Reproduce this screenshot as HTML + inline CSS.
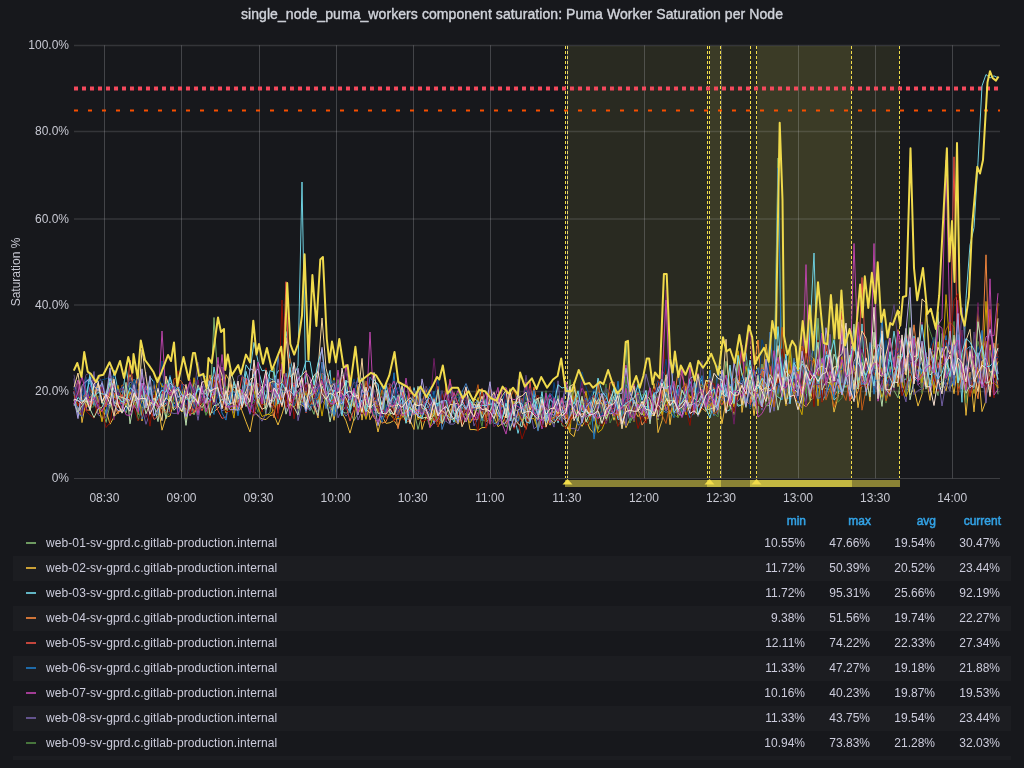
<!DOCTYPE html>
<html><head><meta charset="utf-8">
<style>
html,body{margin:0;padding:0;}
body{width:1024px;height:768px;overflow:hidden;will-change:transform;background:#17181c;font-family:"Liberation Sans",sans-serif;color:#ccccdc;position:relative;}
.title{position:absolute;left:0;top:5px;width:1024px;text-align:center;font-size:14px;line-height:18px;color:#d0d3da;letter-spacing:0.08px;-webkit-text-stroke:0.4px #d0d3da;}
svg{position:absolute;left:0;top:0;}
.grid line.h{stroke:rgba(210,210,215,0.155);stroke-width:1.4;} .grid line.h0{stroke:rgba(210,210,215,0.2);stroke-width:1;} .grid line.v{stroke:rgba(210,210,215,0.24);stroke-width:1;}
.axis text{font-size:12px;fill:#c7c8d2;font-family:"Liberation Sans",sans-serif;}
.row{position:absolute;left:13px;width:998px;height:25px;}
.row.alt{background:#1c1d21;}
.row i{position:absolute;left:13px;top:11px;width:10px;height:2px;opacity:0.85;}
.row .nm{position:absolute;left:33px;top:5px;font-size:12px;line-height:14px;color:#ccccdc;white-space:nowrap;letter-spacing:0.09px;}
.row .v{position:absolute;top:5px;font-size:12px;line-height:14px;color:#ccccdc;text-align:right;width:80px;}
.c1{left:712px} .c2{left:777px} .c3{left:842px} .c4{left:907px}
.hdr{position:absolute;top:514px;font-size:12px;line-height:14px;color:#33a2e5;-webkit-text-stroke:0.5px #33a2e5;text-align:right;width:80px;}
</style></head><body>
<div class="title">single_node_puma_workers component saturation: Puma Worker Saturation per Node</div>
<svg width="1024" height="520" viewBox="0 0 1024 520">
<g><rect x="568" y="46" width="153" height="432" fill="#E8EE5A" fill-opacity="0.09"/><rect x="710" y="46" width="142" height="432" fill="#E8EE5A" fill-opacity="0.09"/><rect x="757" y="46" width="143" height="432" fill="#E8EE5A" fill-opacity="0.09"/><line x1="565.5" y1="46" x2="565.5" y2="478" stroke="#F2DC4A" stroke-width="1" stroke-dasharray="3,2"/><line x1="567.5" y1="46" x2="567.5" y2="478" stroke="#F2DC4A" stroke-width="1" stroke-dasharray="3,2"/><line x1="707.5" y1="46" x2="707.5" y2="478" stroke="#F2DC4A" stroke-width="1" stroke-dasharray="3,2"/><line x1="709.5" y1="46" x2="709.5" y2="478" stroke="#F2DC4A" stroke-width="1" stroke-dasharray="3,2"/><line x1="720.5" y1="46" x2="720.5" y2="478" stroke="#F2DC4A" stroke-width="1" stroke-dasharray="3,2"/><line x1="750.5" y1="46" x2="750.5" y2="478" stroke="#F2DC4A" stroke-width="1" stroke-dasharray="3,2"/><line x1="756.5" y1="46" x2="756.5" y2="478" stroke="#F2DC4A" stroke-width="1" stroke-dasharray="3,2"/><line x1="851.5" y1="46" x2="851.5" y2="478" stroke="#F2DC4A" stroke-width="1" stroke-dasharray="3,2"/><line x1="899.5" y1="46" x2="899.5" y2="478" stroke="#F2DC4A" stroke-width="1" stroke-dasharray="3,2"/></g>
<g class="grid"><line class="h" x1="74" y1="45.50" x2="1000" y2="45.50"/><line class="h" x1="74" y1="131.50" x2="1000" y2="131.50"/><line class="h" x1="74" y1="219.00" x2="1000" y2="219.00"/><line class="h" x1="74" y1="305.00" x2="1000" y2="305.00"/><line class="h" x1="74" y1="391.50" x2="1000" y2="391.50"/><line class="h0" x1="74" y1="478.5" x2="1000" y2="478.5"/><line class="v" x1="104.5" y1="45.3" x2="104.5" y2="478.3"/><line class="v" x1="181.5" y1="45.3" x2="181.5" y2="478.3"/><line class="v" x1="259.5" y1="45.3" x2="259.5" y2="478.3"/><line class="v" x1="336.5" y1="45.3" x2="336.5" y2="478.3"/><line class="v" x1="413.5" y1="45.3" x2="413.5" y2="478.3"/><line class="v" x1="490.5" y1="45.3" x2="490.5" y2="478.3"/><line class="v" x1="567.5" y1="45.3" x2="567.5" y2="478.3"/><line class="v" x1="644.5" y1="45.3" x2="644.5" y2="478.3"/><line class="v" x1="721.5" y1="45.3" x2="721.5" y2="478.3"/><line class="v" x1="798.5" y1="45.3" x2="798.5" y2="478.3"/><line class="v" x1="875.5" y1="45.3" x2="875.5" y2="478.3"/><line class="v" x1="952.5" y1="45.3" x2="952.5" y2="478.3"/></g>

<line x1="74" y1="88.5" x2="1000" y2="88.5" stroke="#F2495C" stroke-width="4" stroke-dasharray="4,4"/>
<line x1="74" y1="110.5" x2="1000" y2="110.5" stroke="#F74F00" stroke-width="2" stroke-dasharray="4,10"/>

<g><polyline fill="none" stroke="#7EB26D" stroke-width="1" stroke-linejoin="round" points="74.0,400.1 78.0,408.1 82.0,410.5 86.0,396.3 90.0,411.0 94.0,394.6 98.0,406.3 102.0,409.0 106.0,422.5 110.0,405.0 114.0,414.5 118.0,397.9 122.0,402.3 126.0,413.1 130.0,399.1 134.0,397.7 138.0,415.0 142.0,392.3 146.0,407.6 150.0,408.0 154.0,397.7 158.0,410.2 162.0,405.8 166.0,378.7 170.0,412.6 174.0,383.6 178.0,409.1 182.0,389.9 186.0,413.7 190.0,401.4 194.0,414.9 198.0,405.3 202.0,395.8 206.0,414.6 210.0,408.0 214.0,317.5 218.0,383.7 222.0,402.3 226.0,391.0 230.0,406.7 234.0,403.7 238.0,411.5 242.0,406.7 246.0,398.5 250.0,393.1 254.0,382.2 258.0,383.8 262.0,386.9 266.0,415.5 270.0,412.5 274.0,367.4 278.0,408.8 282.0,397.6 286.0,390.2 290.0,395.8 294.0,395.0 298.0,403.9 302.0,399.8 306.0,386.2 310.0,405.1 314.0,414.3 318.0,388.4 322.0,381.8 326.0,377.7 330.0,391.4 334.0,416.9 338.0,379.5 342.0,411.3 346.0,413.2 350.0,411.1 354.0,420.6 358.0,413.5 362.0,406.7 366.0,407.2 370.0,411.6 374.0,408.4 378.0,415.6 382.0,416.2 386.0,417.1 390.0,404.9 394.0,420.5 398.0,413.8 402.0,402.7 406.0,411.3 410.0,409.7 414.0,410.4 418.0,429.4 422.0,414.3 426.0,411.9 430.0,415.3 434.0,413.4 438.0,414.8 442.0,406.0 446.0,414.1 450.0,401.8 454.0,413.4 458.0,413.9 462.0,401.8 466.0,391.3 470.0,400.1 474.0,404.0 478.0,406.0 482.0,419.2 486.0,421.6 490.0,419.0 494.0,423.8 498.0,421.4 502.0,420.5 506.0,427.0 510.0,414.4 514.0,411.6 518.0,409.3 522.0,409.3 526.0,412.4 530.0,420.1 534.0,412.5 538.0,430.1 542.0,418.0 546.0,421.8 550.0,405.6 554.0,412.9 558.0,395.5 562.0,425.8 566.0,426.5 570.0,415.8 574.0,396.9 578.0,414.6 582.0,398.5 586.0,414.8 590.0,411.2 594.0,413.0 598.0,429.5 602.0,415.4 606.0,420.9 610.0,410.2 614.0,399.4 618.0,418.0 622.0,411.1 626.0,341.0 630.0,422.3 634.0,415.5 638.0,391.9 642.0,408.7 646.0,413.2 650.0,396.5 654.0,397.0 658.0,420.0 662.0,397.0 666.0,373.9 670.0,400.2 674.0,402.0 678.0,393.6 682.0,405.6 686.0,403.6 690.0,402.6 694.0,408.6 698.0,415.5 702.0,405.4 706.0,397.1 710.0,411.9 714.0,403.1 718.0,396.5 722.0,400.4 726.0,361.3 730.0,387.6 734.0,396.7 738.0,404.6 742.0,405.8 746.0,362.6 750.0,378.4 754.0,404.2 758.0,413.0 762.0,364.1 766.0,405.8 770.0,405.4 774.0,385.4 778.0,158.0 782.0,378.9 786.0,391.9 790.0,344.5 794.0,385.7 798.0,376.3 802.0,403.7 806.0,378.3 810.0,400.5 814.0,397.8 818.0,318.2 822.0,386.7 826.0,388.8 830.0,389.7 834.0,398.2 838.0,356.6 842.0,380.0 846.0,387.6 850.0,380.4 854.0,389.7 858.0,364.5 862.0,352.1 866.0,381.7 870.0,359.6 874.0,355.9 878.0,386.9 882.0,355.5 886.0,398.3 890.0,366.5 894.0,390.3 898.0,397.8 902.0,371.0 906.0,388.7 910.0,390.6 914.0,348.5 918.0,339.4 922.0,383.6 926.0,370.0 930.0,381.0 934.0,380.5 938.0,395.6 942.0,333.5 946.0,364.1 950.0,388.5 954.0,380.3 958.0,371.1 962.0,369.8 966.0,367.3 970.0,354.2 974.0,390.6 978.0,356.5 982.0,379.3 986.0,394.5 990.0,385.2 994.0,360.9 998.0,394.3"/>
<polyline fill="none" stroke="#EAB839" stroke-width="1" stroke-linejoin="round" points="74.0,389.6 78.0,383.5 82.0,422.6 86.0,401.0 90.0,403.8 94.0,385.4 98.0,404.1 102.0,420.7 106.0,409.6 110.0,424.2 114.0,417.0 118.0,411.7 122.0,411.1 126.0,393.8 130.0,374.6 134.0,386.6 138.0,375.7 142.0,421.0 146.0,393.5 150.0,403.4 154.0,405.2 158.0,404.6 162.0,430.2 166.0,417.2 170.0,416.0 174.0,402.3 178.0,408.1 182.0,411.8 186.0,408.4 190.0,414.6 194.0,412.4 198.0,408.1 202.0,404.3 206.0,397.9 210.0,413.0 214.0,411.9 218.0,408.1 222.0,403.6 226.0,374.6 230.0,381.6 234.0,413.1 238.0,399.5 242.0,410.8 246.0,421.8 250.0,432.0 254.0,410.7 258.0,416.3 262.0,418.9 266.0,419.6 270.0,415.6 274.0,414.8 278.0,425.0 282.0,414.0 286.0,400.9 290.0,397.8 294.0,406.3 298.0,403.5 302.0,404.8 306.0,409.0 310.0,401.4 314.0,403.7 318.0,418.0 322.0,381.7 326.0,400.2 330.0,402.2 334.0,420.3 338.0,396.3 342.0,412.7 346.0,420.8 350.0,433.1 354.0,418.7 358.0,384.1 362.0,420.1 366.0,393.1 370.0,419.8 374.0,412.3 378.0,432.0 382.0,415.6 386.0,423.4 390.0,422.7 394.0,420.4 398.0,426.7 402.0,412.1 406.0,422.6 410.0,420.1 414.0,429.5 418.0,392.1 422.0,429.5 426.0,416.8 430.0,417.4 434.0,415.2 438.0,426.9 442.0,416.0 446.0,421.3 450.0,410.9 454.0,402.6 458.0,416.2 462.0,412.6 466.0,406.7 470.0,429.6 474.0,429.5 478.0,430.3 482.0,427.6 486.0,427.5 490.0,416.5 494.0,416.2 498.0,426.7 502.0,423.8 506.0,415.6 510.0,388.6 514.0,410.0 518.0,410.7 522.0,419.5 526.0,428.5 530.0,415.5 534.0,412.6 538.0,428.5 542.0,403.4 546.0,418.0 550.0,425.2 554.0,416.3 558.0,415.7 562.0,417.3 566.0,420.7 570.0,433.2 574.0,436.6 578.0,419.7 582.0,426.4 586.0,419.1 590.0,429.1 594.0,433.6 598.0,406.6 602.0,403.3 606.0,404.3 610.0,406.5 614.0,420.2 618.0,406.2 622.0,413.7 626.0,427.7 630.0,418.8 634.0,409.4 638.0,416.7 642.0,412.3 646.0,419.6 650.0,416.9 654.0,383.5 658.0,432.6 662.0,420.6 666.0,383.3 670.0,424.7 674.0,395.2 678.0,417.5 682.0,409.7 686.0,386.4 690.0,397.7 694.0,396.6 698.0,416.2 702.0,408.1 706.0,411.6 710.0,397.7 714.0,402.5 718.0,396.4 722.0,423.7 726.0,400.8 730.0,405.2 734.0,414.3 738.0,355.5 742.0,412.4 746.0,385.2 750.0,382.0 754.0,415.7 758.0,387.9 762.0,387.4 766.0,344.0 770.0,372.3 774.0,395.4 778.0,374.4 782.0,391.7 786.0,391.3 790.0,385.1 794.0,393.1 798.0,367.0 802.0,403.5 806.0,406.9 810.0,401.4 814.0,384.8 818.0,364.9 822.0,401.7 826.0,394.6 830.0,381.5 834.0,412.1 838.0,397.1 842.0,363.3 846.0,371.0 850.0,365.2 854.0,366.6 858.0,407.7 862.0,382.2 866.0,373.0 870.0,401.1 874.0,341.4 878.0,381.2 882.0,369.0 886.0,379.6 890.0,374.6 894.0,357.0 898.0,386.7 902.0,372.4 906.0,373.2 910.0,394.9 914.0,388.8 918.0,406.1 922.0,394.2 926.0,376.2 930.0,400.4 934.0,354.5 938.0,387.1 942.0,382.2 946.0,390.8 950.0,371.9 954.0,393.8 958.0,364.7 962.0,359.8 966.0,415.4 970.0,372.1 974.0,411.9 978.0,366.8 982.0,411.6 986.0,400.9 990.0,344.7 994.0,377.9 998.0,361.4"/>
<polyline fill="none" stroke="#6ED0E0" stroke-width="1" stroke-linejoin="round" points="74.0,391.8 78.0,412.1 82.0,396.2 86.0,395.8 90.0,374.0 94.0,405.5 98.0,385.7 102.0,403.7 106.0,403.0 110.0,405.8 114.0,370.3 118.0,390.5 122.0,399.8 126.0,367.7 130.0,392.0 134.0,401.4 138.0,403.1 142.0,390.0 146.0,403.1 150.0,376.9 154.0,382.4 158.0,402.9 162.0,405.0 166.0,403.5 170.0,375.7 174.0,400.1 178.0,396.9 182.0,396.0 186.0,398.7 190.0,402.1 194.0,382.5 198.0,387.3 202.0,393.6 206.0,393.0 210.0,380.6 214.0,375.0 218.0,395.1 222.0,367.0 226.0,397.3 230.0,383.8 234.0,387.7 238.0,386.9 242.0,391.5 246.0,364.8 250.0,370.7 254.0,342.4 258.0,361.3 262.0,370.8 266.0,369.9 270.0,378.7 274.0,380.0 278.0,370.9 282.0,370.1 286.0,331.5 290.0,358.9 294.0,375.2 298.0,365.7 302.0,182.0 306.0,399.4 310.0,410.5 314.0,386.8 318.0,404.6 322.0,378.9 326.0,386.8 330.0,370.3 334.0,414.3 338.0,389.0 342.0,375.2 346.0,404.9 350.0,412.5 354.0,396.6 358.0,403.2 362.0,404.2 366.0,411.6 370.0,408.4 374.0,406.2 378.0,398.7 382.0,405.2 386.0,413.3 390.0,415.1 394.0,400.2 398.0,412.5 402.0,388.7 406.0,411.4 410.0,412.3 414.0,387.6 418.0,405.2 422.0,416.1 426.0,408.6 430.0,404.9 434.0,423.7 438.0,402.8 442.0,423.2 446.0,406.7 450.0,387.6 454.0,414.0 458.0,421.3 462.0,407.0 466.0,410.8 470.0,401.9 474.0,408.0 478.0,400.8 482.0,388.9 486.0,410.9 490.0,414.7 494.0,399.5 498.0,408.0 502.0,403.4 506.0,412.0 510.0,408.3 514.0,414.0 518.0,433.4 522.0,418.7 526.0,409.4 530.0,411.7 534.0,393.6 538.0,417.8 542.0,409.2 546.0,415.0 550.0,422.7 554.0,403.8 558.0,422.9 562.0,412.1 566.0,385.4 570.0,401.2 574.0,389.7 578.0,397.5 582.0,406.8 586.0,404.9 590.0,409.5 594.0,391.0 598.0,397.5 602.0,409.2 606.0,409.9 610.0,399.4 614.0,396.9 618.0,419.6 622.0,417.2 626.0,399.5 630.0,422.6 634.0,400.0 638.0,407.5 642.0,403.3 646.0,407.0 650.0,403.7 654.0,397.7 658.0,405.0 662.0,400.9 666.0,393.1 670.0,405.9 674.0,403.6 678.0,385.1 682.0,390.9 686.0,398.2 690.0,381.5 694.0,393.3 698.0,375.3 702.0,381.2 706.0,408.3 710.0,417.9 714.0,401.1 718.0,410.8 722.0,388.7 726.0,411.6 730.0,409.7 734.0,396.9 738.0,406.3 742.0,404.6 746.0,352.7 750.0,393.0 754.0,405.8 758.0,379.2 762.0,385.0 766.0,390.3 770.0,391.1 774.0,393.5 778.0,396.9 782.0,399.7 786.0,375.4 790.0,393.0 794.0,375.5 798.0,387.4 802.0,387.5 806.0,404.6 810.0,330.0 814.0,253.0 818.0,388.3 822.0,360.5 826.0,351.1 830.0,368.0 834.0,400.1 838.0,396.3 842.0,337.3 846.0,358.7 850.0,390.1 854.0,380.1 858.0,389.0 862.0,323.9 866.0,395.5 870.0,360.0 874.0,366.1 878.0,380.4 882.0,390.7 886.0,357.0 890.0,361.6 894.0,331.1 898.0,357.4 902.0,380.6 906.0,378.9 910.0,381.1 914.0,335.9 918.0,360.2 922.0,374.4 926.0,363.9 930.0,391.2 934.0,374.0 938.0,365.9 942.0,354.1 946.0,362.7 950.0,371.0 954.0,379.0 958.0,349.9 962.0,402.3 966.0,298.3 970.0,244.9 974.0,227.7 978.0,162.1 982.0,85.9 986.0,74.5 990.0,78.0 994.0,75.8 998.0,77.8"/>
<polyline fill="none" stroke="#EF843C" stroke-width="1" stroke-linejoin="round" points="74.0,392.9 78.0,412.8 82.0,399.5 86.0,410.0 90.0,410.2 94.0,398.0 98.0,387.5 102.0,401.8 106.0,406.9 110.0,392.1 114.0,403.1 118.0,413.9 122.0,405.9 126.0,395.6 130.0,391.4 134.0,397.3 138.0,373.5 142.0,408.4 146.0,401.2 150.0,407.1 154.0,382.2 158.0,415.1 162.0,407.2 166.0,405.6 170.0,398.3 174.0,394.4 178.0,409.9 182.0,394.9 186.0,405.7 190.0,410.6 194.0,407.9 198.0,402.3 202.0,397.9 206.0,390.4 210.0,374.9 214.0,402.7 218.0,381.0 222.0,392.3 226.0,398.8 230.0,383.4 234.0,390.4 238.0,410.4 242.0,408.2 246.0,378.2 250.0,395.3 254.0,383.5 258.0,403.2 262.0,404.2 266.0,395.9 270.0,398.0 274.0,417.8 278.0,383.3 282.0,407.1 286.0,374.5 290.0,401.5 294.0,404.6 298.0,399.6 302.0,390.0 306.0,395.7 310.0,406.5 314.0,392.0 318.0,394.9 322.0,399.0 326.0,396.5 330.0,407.8 334.0,399.5 338.0,403.5 342.0,409.4 346.0,392.1 350.0,382.2 354.0,403.2 358.0,402.7 362.0,394.2 366.0,416.1 370.0,406.4 374.0,397.5 378.0,407.9 382.0,423.2 386.0,421.7 390.0,411.4 394.0,403.9 398.0,428.7 402.0,410.3 406.0,406.2 410.0,386.4 414.0,399.6 418.0,412.3 422.0,403.5 426.0,389.6 430.0,407.7 434.0,420.3 438.0,386.2 442.0,424.1 446.0,415.1 450.0,422.2 454.0,397.1 458.0,418.6 462.0,406.7 466.0,411.0 470.0,419.9 474.0,419.4 478.0,419.4 482.0,388.5 486.0,420.3 490.0,401.1 494.0,414.8 498.0,416.1 502.0,415.5 506.0,411.7 510.0,413.6 514.0,411.0 518.0,424.0 522.0,404.2 526.0,419.7 530.0,408.5 534.0,387.2 538.0,406.7 542.0,410.1 546.0,407.7 550.0,414.6 554.0,411.8 558.0,410.4 562.0,414.5 566.0,417.6 570.0,419.4 574.0,417.5 578.0,415.8 582.0,397.7 586.0,406.6 590.0,404.0 594.0,416.6 598.0,380.4 602.0,415.6 606.0,415.6 610.0,382.8 614.0,382.1 618.0,409.5 622.0,398.7 626.0,411.5 630.0,406.5 634.0,408.3 638.0,409.0 642.0,425.1 646.0,419.4 650.0,410.9 654.0,398.8 658.0,414.2 662.0,390.0 666.0,410.1 670.0,414.0 674.0,399.8 678.0,371.9 682.0,375.4 686.0,389.1 690.0,401.8 694.0,393.3 698.0,393.6 702.0,384.7 706.0,389.6 710.0,409.7 714.0,387.0 718.0,406.6 722.0,397.9 726.0,396.5 730.0,398.5 734.0,413.7 738.0,396.0 742.0,385.0 746.0,384.3 750.0,405.6 754.0,369.0 758.0,340.0 762.0,398.8 766.0,397.4 770.0,398.3 774.0,374.9 778.0,367.9 782.0,386.2 786.0,388.3 790.0,369.6 794.0,387.2 798.0,403.2 802.0,389.2 806.0,379.1 810.0,375.8 814.0,358.5 818.0,386.9 822.0,381.5 826.0,367.6 830.0,377.4 834.0,396.3 838.0,390.1 842.0,357.9 846.0,348.1 850.0,377.2 854.0,400.1 858.0,391.3 862.0,378.2 866.0,362.5 870.0,372.5 874.0,362.7 878.0,379.7 882.0,321.4 886.0,383.4 890.0,396.4 894.0,368.4 898.0,329.6 902.0,387.8 906.0,356.1 910.0,356.9 914.0,324.8 918.0,360.4 922.0,342.8 926.0,355.9 930.0,361.2 934.0,389.8 938.0,381.1 942.0,362.5 946.0,367.1 950.0,370.9 954.0,344.0 958.0,383.4 962.0,365.4 966.0,339.5 970.0,395.2 974.0,381.1 978.0,398.8 982.0,353.7 986.0,254.8 990.0,396.9 994.0,343.2 998.0,388.4"/>
<polyline fill="none" stroke="#E24D42" stroke-width="1" stroke-linejoin="round" points="74.0,391.2 78.0,403.8 82.0,404.8 86.0,406.4 90.0,405.4 94.0,401.4 98.0,413.9 102.0,411.0 106.0,404.7 110.0,394.7 114.0,392.9 118.0,407.7 122.0,394.3 126.0,404.7 130.0,360.0 134.0,392.2 138.0,413.8 142.0,391.1 146.0,386.6 150.0,407.6 154.0,419.5 158.0,416.2 162.0,394.7 166.0,377.5 170.0,386.1 174.0,407.5 178.0,405.6 182.0,388.7 186.0,396.4 190.0,379.9 194.0,412.7 198.0,402.0 202.0,410.8 206.0,400.8 210.0,401.7 214.0,399.4 218.0,410.7 222.0,418.4 226.0,417.0 230.0,399.9 234.0,381.4 238.0,398.0 242.0,376.7 246.0,379.3 250.0,409.4 254.0,397.1 258.0,394.9 262.0,391.6 266.0,396.1 270.0,405.3 274.0,380.7 278.0,413.3 282.0,393.1 286.0,281.7 290.0,408.6 294.0,382.7 298.0,404.1 302.0,392.4 306.0,412.9 310.0,395.2 314.0,408.6 318.0,415.7 322.0,373.1 326.0,376.2 330.0,407.3 334.0,395.8 338.0,403.4 342.0,411.9 346.0,405.6 350.0,421.1 354.0,409.1 358.0,396.3 362.0,413.7 366.0,395.5 370.0,406.4 374.0,416.9 378.0,404.0 382.0,405.9 386.0,391.9 390.0,387.5 394.0,411.7 398.0,416.7 402.0,391.9 406.0,415.4 410.0,392.8 414.0,395.4 418.0,404.4 422.0,414.5 426.0,402.2 430.0,411.2 434.0,420.8 438.0,406.6 442.0,412.6 446.0,405.4 450.0,379.0 454.0,410.0 458.0,414.3 462.0,394.8 466.0,401.4 470.0,422.2 474.0,418.0 478.0,407.1 482.0,410.9 486.0,418.4 490.0,419.8 494.0,400.2 498.0,422.5 502.0,410.1 506.0,424.0 510.0,418.0 514.0,427.8 518.0,413.7 522.0,421.6 526.0,429.4 530.0,381.8 534.0,414.4 538.0,415.7 542.0,408.3 546.0,408.6 550.0,418.3 554.0,398.9 558.0,416.0 562.0,400.3 566.0,417.9 570.0,420.9 574.0,415.1 578.0,407.8 582.0,408.3 586.0,411.7 590.0,408.0 594.0,400.9 598.0,418.9 602.0,406.8 606.0,398.0 610.0,400.8 614.0,400.3 618.0,414.6 622.0,425.6 626.0,394.7 630.0,416.7 634.0,397.4 638.0,393.0 642.0,396.8 646.0,400.9 650.0,407.2 654.0,394.1 658.0,380.7 662.0,400.0 666.0,406.2 670.0,398.0 674.0,401.7 678.0,400.3 682.0,401.3 686.0,405.6 690.0,401.1 694.0,414.4 698.0,394.6 702.0,385.7 706.0,385.3 710.0,406.0 714.0,411.5 718.0,399.9 722.0,404.8 726.0,396.7 730.0,388.0 734.0,403.7 738.0,390.7 742.0,348.0 746.0,401.2 750.0,404.8 754.0,395.4 758.0,394.0 762.0,367.8 766.0,387.7 770.0,366.8 774.0,386.5 778.0,367.6 782.0,372.6 786.0,368.4 790.0,360.7 794.0,392.7 798.0,398.8 802.0,385.6 806.0,351.9 810.0,375.7 814.0,399.0 818.0,383.9 822.0,397.0 826.0,343.7 830.0,365.3 834.0,396.1 838.0,378.3 842.0,311.0 846.0,378.1 850.0,401.1 854.0,385.6 858.0,374.0 862.0,277.5 866.0,367.5 870.0,369.1 874.0,387.7 878.0,360.4 882.0,334.5 886.0,385.2 890.0,382.2 894.0,385.7 898.0,369.5 902.0,370.4 906.0,332.4 910.0,346.0 914.0,352.1 918.0,358.7 922.0,391.5 926.0,372.3 930.0,368.1 934.0,338.7 938.0,369.1 942.0,348.7 946.0,359.5 950.0,358.2 954.0,156.8 958.0,388.5 962.0,356.2 966.0,343.8 970.0,396.2 974.0,379.4 978.0,368.5 982.0,352.1 986.0,400.3 990.0,309.3 994.0,370.0 998.0,356.4"/>
<polyline fill="none" stroke="#1F78C1" stroke-width="1" stroke-linejoin="round" points="74.0,388.5 78.0,401.6 82.0,398.3 86.0,380.8 90.0,383.8 94.0,392.3 98.0,388.0 102.0,398.5 106.0,414.7 110.0,377.6 114.0,399.8 118.0,388.1 122.0,411.6 126.0,410.3 130.0,392.7 134.0,379.0 138.0,403.2 142.0,419.0 146.0,385.8 150.0,400.2 154.0,414.8 158.0,414.8 162.0,383.3 166.0,399.2 170.0,385.0 174.0,407.2 178.0,400.8 182.0,393.8 186.0,398.3 190.0,383.4 194.0,406.1 198.0,387.0 202.0,401.0 206.0,402.1 210.0,405.2 214.0,414.5 218.0,392.2 222.0,413.0 226.0,420.1 230.0,393.5 234.0,391.5 238.0,415.8 242.0,391.3 246.0,401.0 250.0,414.4 254.0,393.8 258.0,406.4 262.0,392.7 266.0,402.6 270.0,403.9 274.0,383.0 278.0,401.1 282.0,402.8 286.0,379.5 290.0,374.1 294.0,404.8 298.0,399.0 302.0,399.2 306.0,411.9 310.0,391.1 314.0,390.8 318.0,385.7 322.0,399.9 326.0,378.6 330.0,408.9 334.0,415.0 338.0,384.5 342.0,404.6 346.0,389.0 350.0,400.5 354.0,394.8 358.0,405.7 362.0,400.1 366.0,393.5 370.0,401.7 374.0,400.6 378.0,399.7 382.0,383.5 386.0,412.4 390.0,411.5 394.0,372.7 398.0,419.7 402.0,385.1 406.0,395.9 410.0,415.8 414.0,403.4 418.0,388.0 422.0,416.2 426.0,408.3 430.0,414.0 434.0,391.3 438.0,412.7 442.0,415.4 446.0,415.9 450.0,403.7 454.0,398.1 458.0,410.1 462.0,407.2 466.0,415.9 470.0,407.7 474.0,410.6 478.0,403.5 482.0,405.7 486.0,407.1 490.0,412.4 494.0,393.6 498.0,401.4 502.0,401.4 506.0,390.4 510.0,410.0 514.0,410.7 518.0,422.9 522.0,399.5 526.0,397.3 530.0,413.5 534.0,390.3 538.0,408.3 542.0,412.3 546.0,400.6 550.0,393.3 554.0,397.6 558.0,411.2 562.0,402.0 566.0,385.0 570.0,416.0 574.0,407.3 578.0,408.6 582.0,400.7 586.0,408.9 590.0,396.1 594.0,439.1 598.0,413.2 602.0,416.1 606.0,400.9 610.0,412.1 614.0,412.5 618.0,381.2 622.0,419.8 626.0,391.8 630.0,410.0 634.0,412.0 638.0,400.1 642.0,409.3 646.0,407.1 650.0,418.6 654.0,390.3 658.0,407.4 662.0,409.8 666.0,412.5 670.0,410.4 674.0,417.7 678.0,388.8 682.0,412.5 686.0,406.9 690.0,417.9 694.0,412.6 698.0,390.7 702.0,375.6 706.0,409.0 710.0,370.1 714.0,404.3 718.0,406.3 722.0,394.2 726.0,385.7 730.0,384.1 734.0,393.5 738.0,391.0 742.0,396.6 746.0,382.5 750.0,368.4 754.0,391.6 758.0,378.1 762.0,369.1 766.0,372.7 770.0,387.3 774.0,394.7 778.0,168.0 782.0,399.7 786.0,354.6 790.0,398.1 794.0,364.3 798.0,359.8 802.0,374.5 806.0,386.4 810.0,373.7 814.0,375.5 818.0,376.6 822.0,400.6 826.0,394.1 830.0,384.5 834.0,397.8 838.0,371.2 842.0,369.1 846.0,333.1 850.0,378.1 854.0,387.0 858.0,335.7 862.0,365.0 866.0,390.8 870.0,351.9 874.0,394.2 878.0,363.7 882.0,317.0 886.0,379.6 890.0,361.0 894.0,361.5 898.0,342.9 902.0,376.1 906.0,364.4 910.0,364.7 914.0,378.8 918.0,382.1 922.0,369.9 926.0,360.5 930.0,359.2 934.0,384.7 938.0,373.5 942.0,369.1 946.0,335.5 950.0,386.4 954.0,380.2 958.0,319.7 962.0,366.9 966.0,391.8 970.0,380.6 974.0,374.7 978.0,382.9 982.0,330.4 986.0,381.7 990.0,386.4 994.0,348.1 998.0,373.5"/>
<polyline fill="none" stroke="#BA43A9" stroke-width="1" stroke-linejoin="round" points="74.0,392.5 78.0,380.0 82.0,398.7 86.0,410.5 90.0,387.2 94.0,379.1 98.0,403.3 102.0,383.9 106.0,404.8 110.0,403.5 114.0,405.5 118.0,395.5 122.0,386.9 126.0,399.6 130.0,394.5 134.0,380.8 138.0,403.7 142.0,374.8 146.0,388.7 150.0,404.2 154.0,406.0 158.0,403.3 162.0,331.0 166.0,396.3 170.0,391.9 174.0,396.5 178.0,389.9 182.0,383.8 186.0,386.1 190.0,415.9 194.0,399.3 198.0,401.3 202.0,382.0 206.0,390.5 210.0,391.3 214.0,387.5 218.0,392.1 222.0,354.5 226.0,392.1 230.0,391.0 234.0,403.7 238.0,390.0 242.0,391.5 246.0,378.7 250.0,382.0 254.0,415.4 258.0,394.5 262.0,391.9 266.0,380.3 270.0,399.2 274.0,397.4 278.0,387.9 282.0,394.0 286.0,408.2 290.0,402.0 294.0,399.1 298.0,376.6 302.0,392.2 306.0,382.8 310.0,384.9 314.0,394.0 318.0,407.1 322.0,401.8 326.0,376.6 330.0,385.1 334.0,404.2 338.0,387.5 342.0,401.6 346.0,364.1 350.0,392.7 354.0,397.3 358.0,377.4 362.0,385.7 366.0,417.1 370.0,332.0 374.0,411.1 378.0,398.8 382.0,396.6 386.0,412.9 390.0,388.2 394.0,381.1 398.0,393.9 402.0,407.4 406.0,378.1 410.0,404.8 414.0,406.4 418.0,413.3 422.0,406.8 426.0,400.9 430.0,398.3 434.0,411.6 438.0,409.7 442.0,414.5 446.0,407.1 450.0,380.5 454.0,400.4 458.0,390.4 462.0,401.6 466.0,397.2 470.0,410.6 474.0,420.6 478.0,412.3 482.0,408.2 486.0,410.3 490.0,416.5 494.0,412.9 498.0,416.7 502.0,390.5 506.0,387.5 510.0,398.4 514.0,399.7 518.0,398.2 522.0,411.1 526.0,382.0 530.0,416.4 534.0,410.1 538.0,409.0 542.0,429.0 546.0,407.3 550.0,394.6 554.0,405.5 558.0,421.0 562.0,408.7 566.0,382.0 570.0,396.7 574.0,409.3 578.0,402.3 582.0,387.9 586.0,395.3 590.0,413.8 594.0,406.3 598.0,407.5 602.0,406.0 606.0,401.5 610.0,407.0 614.0,404.2 618.0,415.8 622.0,403.1 626.0,365.0 630.0,402.6 634.0,384.2 638.0,401.7 642.0,399.0 646.0,416.4 650.0,405.4 654.0,404.6 658.0,396.0 662.0,400.9 666.0,407.4 670.0,412.0 674.0,406.9 678.0,401.1 682.0,367.0 686.0,408.2 690.0,401.3 694.0,401.5 698.0,373.5 702.0,397.8 706.0,403.0 710.0,401.4 714.0,413.5 718.0,385.4 722.0,395.1 726.0,388.5 730.0,402.5 734.0,379.5 738.0,375.3 742.0,345.2 746.0,394.2 750.0,371.3 754.0,370.2 758.0,385.0 762.0,400.1 766.0,360.4 770.0,382.8 774.0,350.6 778.0,378.5 782.0,397.1 786.0,382.3 790.0,384.9 794.0,362.4 798.0,378.8 802.0,376.7 806.0,264.6 810.0,391.3 814.0,382.8 818.0,375.5 822.0,358.2 826.0,381.3 830.0,356.4 834.0,374.9 838.0,384.9 842.0,329.2 846.0,382.8 850.0,374.2 854.0,243.5 858.0,350.1 862.0,375.8 866.0,366.9 870.0,385.5 874.0,243.5 878.0,401.2 882.0,380.9 886.0,376.2 890.0,369.1 894.0,380.7 898.0,348.6 902.0,363.8 906.0,393.4 910.0,367.6 914.0,338.0 918.0,385.1 922.0,380.8 926.0,352.4 930.0,391.7 934.0,378.4 938.0,324.9 942.0,318.8 946.0,160.0 950.0,331.8 954.0,385.1 958.0,300.1 962.0,361.4 966.0,374.6 970.0,367.5 974.0,355.4 978.0,315.6 982.0,356.6 986.0,336.7 990.0,335.7 994.0,335.6 998.0,293.2"/>
<polyline fill="none" stroke="#705DA0" stroke-width="1" stroke-linejoin="round" points="74.0,378.5 78.0,416.3 82.0,408.7 86.0,392.0 90.0,401.8 94.0,371.5 98.0,414.5 102.0,417.4 106.0,417.2 110.0,399.7 114.0,401.1 118.0,405.9 122.0,407.5 126.0,387.1 130.0,409.7 134.0,382.7 138.0,393.3 142.0,407.8 146.0,424.3 150.0,412.5 154.0,400.8 158.0,397.6 162.0,401.6 166.0,400.9 170.0,412.4 174.0,413.5 178.0,413.1 182.0,402.0 186.0,422.1 190.0,392.5 194.0,397.6 198.0,420.3 202.0,397.8 206.0,408.5 210.0,409.9 214.0,398.8 218.0,404.1 222.0,410.7 226.0,409.1 230.0,390.9 234.0,413.5 238.0,397.8 242.0,405.8 246.0,390.8 250.0,409.5 254.0,413.7 258.0,414.9 262.0,421.2 266.0,414.3 270.0,379.7 274.0,395.9 278.0,394.4 282.0,389.7 286.0,412.6 290.0,374.8 294.0,366.7 298.0,420.7 302.0,403.1 306.0,408.2 310.0,409.6 314.0,402.4 318.0,412.0 322.0,400.2 326.0,405.8 330.0,413.5 334.0,386.6 338.0,417.8 342.0,410.1 346.0,416.2 350.0,411.2 354.0,398.1 358.0,420.1 362.0,411.1 366.0,417.1 370.0,400.9 374.0,412.8 378.0,412.1 382.0,420.9 386.0,409.5 390.0,411.8 394.0,398.0 398.0,417.2 402.0,401.8 406.0,418.0 410.0,420.9 414.0,410.8 418.0,413.4 422.0,398.4 426.0,407.8 430.0,414.3 434.0,411.3 438.0,421.4 442.0,416.0 446.0,421.3 450.0,424.1 454.0,424.1 458.0,418.7 462.0,420.9 466.0,405.1 470.0,400.1 474.0,425.9 478.0,417.9 482.0,396.9 486.0,426.7 490.0,415.6 494.0,391.8 498.0,424.7 502.0,399.5 506.0,410.3 510.0,427.4 514.0,415.2 518.0,418.1 522.0,414.9 526.0,407.8 530.0,410.3 534.0,428.9 538.0,425.3 542.0,424.7 546.0,409.2 550.0,417.6 554.0,427.1 558.0,380.8 562.0,422.9 566.0,401.5 570.0,428.6 574.0,428.4 578.0,430.9 582.0,421.4 586.0,407.4 590.0,414.4 594.0,411.5 598.0,416.2 602.0,416.2 606.0,414.0 610.0,403.0 614.0,404.8 618.0,406.6 622.0,399.6 626.0,426.0 630.0,383.3 634.0,418.5 638.0,399.3 642.0,407.1 646.0,373.9 650.0,389.6 654.0,411.6 658.0,401.8 662.0,405.2 666.0,411.2 670.0,400.9 674.0,412.7 678.0,411.9 682.0,415.8 686.0,402.5 690.0,413.8 694.0,382.9 698.0,416.4 702.0,398.2 706.0,410.6 710.0,379.0 714.0,403.4 718.0,414.5 722.0,372.4 726.0,403.7 730.0,395.7 734.0,401.0 738.0,401.4 742.0,395.7 746.0,405.8 750.0,386.8 754.0,394.5 758.0,394.6 762.0,410.2 766.0,386.1 770.0,372.9 774.0,411.2 778.0,387.8 782.0,377.3 786.0,405.5 790.0,401.4 794.0,389.5 798.0,401.7 802.0,408.1 806.0,365.6 810.0,383.1 814.0,389.0 818.0,400.8 822.0,375.6 826.0,398.7 830.0,334.3 834.0,382.3 838.0,361.8 842.0,383.3 846.0,347.8 850.0,388.3 854.0,392.5 858.0,381.6 862.0,384.0 866.0,380.4 870.0,382.9 874.0,376.3 878.0,395.1 882.0,388.9 886.0,379.7 890.0,385.6 894.0,368.7 898.0,365.9 902.0,389.1 906.0,401.9 910.0,351.8 914.0,394.6 918.0,390.4 922.0,389.0 926.0,374.6 930.0,351.8 934.0,366.9 938.0,374.7 942.0,406.0 946.0,382.4 950.0,391.2 954.0,341.6 958.0,378.4 962.0,307.6 966.0,355.7 970.0,385.1 974.0,378.7 978.0,385.2 982.0,371.5 986.0,403.1 990.0,350.3 994.0,374.0 998.0,348.5"/>
<polyline fill="none" stroke="#508642" stroke-width="1" stroke-linejoin="round" points="74.0,400.8 78.0,406.0 82.0,399.9 86.0,401.5 90.0,407.5 94.0,406.7 98.0,397.2 102.0,391.5 106.0,393.7 110.0,392.2 114.0,403.6 118.0,395.1 122.0,400.1 126.0,405.9 130.0,385.9 134.0,379.8 138.0,420.6 142.0,406.0 146.0,396.6 150.0,393.8 154.0,394.9 158.0,405.7 162.0,406.5 166.0,417.8 170.0,412.3 174.0,398.7 178.0,403.0 182.0,410.6 186.0,411.9 190.0,408.8 194.0,392.7 198.0,406.0 202.0,402.3 206.0,415.4 210.0,403.4 214.0,402.8 218.0,385.4 222.0,392.9 226.0,386.3 230.0,406.8 234.0,405.7 238.0,388.8 242.0,396.5 246.0,396.6 250.0,407.2 254.0,401.1 258.0,412.4 262.0,389.8 266.0,391.0 270.0,393.5 274.0,405.9 278.0,404.1 282.0,378.7 286.0,394.4 290.0,377.8 294.0,400.1 298.0,392.4 302.0,394.3 306.0,392.5 310.0,405.5 314.0,376.4 318.0,373.6 322.0,374.7 326.0,404.2 330.0,406.9 334.0,395.9 338.0,380.2 342.0,384.3 346.0,402.3 350.0,402.9 354.0,395.6 358.0,406.7 362.0,402.7 366.0,409.2 370.0,397.0 374.0,416.4 378.0,401.1 382.0,390.1 386.0,415.6 390.0,409.4 394.0,395.3 398.0,401.8 402.0,398.3 406.0,407.0 410.0,403.3 414.0,409.4 418.0,415.6 422.0,408.8 426.0,416.3 430.0,427.0 434.0,415.3 438.0,422.2 442.0,403.8 446.0,400.9 450.0,417.9 454.0,401.6 458.0,393.3 462.0,413.6 466.0,415.0 470.0,407.8 474.0,410.9 478.0,409.8 482.0,426.5 486.0,398.7 490.0,424.3 494.0,421.0 498.0,405.6 502.0,406.2 506.0,404.4 510.0,420.6 514.0,419.9 518.0,416.6 522.0,418.7 526.0,394.1 530.0,397.4 534.0,411.7 538.0,414.5 542.0,418.5 546.0,390.7 550.0,414.7 554.0,422.1 558.0,419.3 562.0,415.0 566.0,410.4 570.0,379.6 574.0,407.4 578.0,415.4 582.0,413.9 586.0,414.9 590.0,424.7 594.0,411.5 598.0,399.1 602.0,411.4 606.0,383.9 610.0,423.0 614.0,414.5 618.0,426.0 622.0,418.2 626.0,376.8 630.0,422.7 634.0,407.6 638.0,410.2 642.0,394.7 646.0,394.0 650.0,418.6 654.0,399.2 658.0,395.7 662.0,382.3 666.0,395.3 670.0,400.1 674.0,414.8 678.0,417.6 682.0,404.9 686.0,399.9 690.0,388.3 694.0,400.4 698.0,393.7 702.0,385.2 706.0,406.1 710.0,392.9 714.0,413.2 718.0,416.9 722.0,392.8 726.0,402.3 730.0,408.9 734.0,414.6 738.0,387.0 742.0,397.2 746.0,360.0 750.0,378.0 754.0,396.5 758.0,401.7 762.0,391.3 766.0,400.3 770.0,395.4 774.0,371.7 778.0,396.5 782.0,378.8 786.0,392.9 790.0,384.0 794.0,372.9 798.0,370.6 802.0,360.6 806.0,394.0 810.0,357.4 814.0,349.2 818.0,381.6 822.0,366.1 826.0,385.6 830.0,369.7 834.0,326.1 838.0,402.3 842.0,397.6 846.0,376.2 850.0,394.1 854.0,391.0 858.0,356.1 862.0,357.0 866.0,381.8 870.0,344.0 874.0,347.0 878.0,386.2 882.0,367.4 886.0,403.1 890.0,372.7 894.0,372.7 898.0,344.5 902.0,370.2 906.0,395.8 910.0,296.7 914.0,370.2 918.0,355.2 922.0,393.3 926.0,318.4 930.0,331.2 934.0,343.2 938.0,359.9 942.0,344.3 946.0,348.0 950.0,377.4 954.0,321.4 958.0,386.9 962.0,352.5 966.0,402.9 970.0,349.7 974.0,387.3 978.0,341.3 982.0,356.5 986.0,354.2 990.0,374.5 994.0,363.7 998.0,343.5"/>
<polyline fill="none" stroke="#CCA300" stroke-width="1" stroke-linejoin="round" points="74.0,400.2 78.0,411.6 82.0,415.9 86.0,407.2 90.0,396.3 94.0,388.1 98.0,399.6 102.0,421.9 106.0,400.0 110.0,393.2 114.0,398.5 118.0,385.3 122.0,404.1 126.0,405.2 130.0,391.8 134.0,402.0 138.0,401.1 142.0,402.3 146.0,393.9 150.0,403.4 154.0,403.8 158.0,376.8 162.0,387.1 166.0,384.2 170.0,404.8 174.0,397.1 178.0,405.8 182.0,391.3 186.0,419.6 190.0,405.5 194.0,377.7 198.0,403.8 202.0,396.9 206.0,398.7 210.0,417.2 214.0,379.8 218.0,387.2 222.0,401.5 226.0,413.0 230.0,401.6 234.0,418.1 238.0,386.4 242.0,395.0 246.0,400.8 250.0,384.5 254.0,390.8 258.0,407.2 262.0,416.6 266.0,414.6 270.0,414.6 274.0,409.4 278.0,400.3 282.0,362.3 286.0,388.2 290.0,404.8 294.0,407.2 298.0,394.6 302.0,402.8 306.0,393.4 310.0,398.4 314.0,393.6 318.0,390.3 322.0,416.1 326.0,391.9 330.0,393.6 334.0,377.7 338.0,404.7 342.0,399.3 346.0,404.6 350.0,408.4 354.0,403.0 358.0,413.6 362.0,406.7 366.0,419.4 370.0,405.2 374.0,401.6 378.0,411.0 382.0,405.9 386.0,417.5 390.0,414.2 394.0,419.3 398.0,418.4 402.0,417.8 406.0,407.6 410.0,405.6 414.0,398.8 418.0,419.8 422.0,414.6 426.0,408.4 430.0,427.4 434.0,409.8 438.0,421.3 442.0,415.3 446.0,416.2 450.0,419.9 454.0,418.8 458.0,424.2 462.0,415.5 466.0,413.5 470.0,423.0 474.0,415.9 478.0,397.6 482.0,414.5 486.0,408.4 490.0,414.6 494.0,399.1 498.0,421.5 502.0,415.0 506.0,417.8 510.0,417.2 514.0,401.2 518.0,412.2 522.0,419.8 526.0,417.3 530.0,418.3 534.0,418.5 538.0,430.0 542.0,403.2 546.0,424.4 550.0,419.6 554.0,418.3 558.0,409.9 562.0,406.9 566.0,409.9 570.0,431.6 574.0,381.9 578.0,402.6 582.0,409.9 586.0,391.3 590.0,416.9 594.0,415.1 598.0,432.6 602.0,429.4 606.0,419.1 610.0,409.3 614.0,413.1 618.0,415.5 622.0,407.7 626.0,399.0 630.0,405.4 634.0,421.6 638.0,401.3 642.0,407.8 646.0,419.2 650.0,415.3 654.0,415.7 658.0,398.3 662.0,414.6 666.0,398.1 670.0,413.8 674.0,405.9 678.0,413.8 682.0,398.1 686.0,414.9 690.0,396.0 694.0,400.4 698.0,406.4 702.0,401.6 706.0,379.9 710.0,408.2 714.0,391.9 718.0,398.0 722.0,396.8 726.0,411.4 730.0,387.4 734.0,407.1 738.0,350.7 742.0,375.5 746.0,366.3 750.0,386.4 754.0,405.5 758.0,395.8 762.0,392.9 766.0,386.8 770.0,405.0 774.0,393.4 778.0,362.3 782.0,381.6 786.0,405.8 790.0,349.5 794.0,394.7 798.0,404.3 802.0,414.7 806.0,377.1 810.0,354.7 814.0,359.1 818.0,405.8 822.0,363.6 826.0,381.3 830.0,383.6 834.0,385.8 838.0,367.3 842.0,356.6 846.0,385.0 850.0,385.0 854.0,365.0 858.0,382.8 862.0,373.7 866.0,387.8 870.0,364.2 874.0,362.3 878.0,381.6 882.0,397.4 886.0,384.6 890.0,384.9 894.0,379.8 898.0,355.6 902.0,381.6 906.0,396.7 910.0,387.1 914.0,365.7 918.0,366.7 922.0,382.7 926.0,305.2 930.0,359.3 934.0,393.7 938.0,341.7 942.0,366.5 946.0,294.6 950.0,348.7 954.0,347.6 958.0,381.6 962.0,366.4 966.0,388.0 970.0,346.4 974.0,393.5 978.0,307.2 982.0,376.5 986.0,301.4 990.0,384.0 994.0,382.5 998.0,387.7"/>
<polyline fill="none" stroke="#447EBC" stroke-width="1" stroke-linejoin="round" points="74.0,392.3 78.0,413.9 82.0,416.3 86.0,380.6 90.0,378.6 94.0,401.4 98.0,409.9 102.0,380.9 106.0,397.3 110.0,384.9 114.0,404.7 118.0,396.2 122.0,391.0 126.0,392.0 130.0,382.0 134.0,384.9 138.0,375.8 142.0,400.8 146.0,403.3 150.0,391.3 154.0,407.9 158.0,412.5 162.0,403.5 166.0,411.5 170.0,411.9 174.0,382.5 178.0,395.4 182.0,400.0 186.0,390.7 190.0,393.1 194.0,400.9 198.0,375.5 202.0,375.7 206.0,376.4 210.0,385.8 214.0,404.3 218.0,394.7 222.0,387.7 226.0,394.1 230.0,407.5 234.0,404.5 238.0,392.1 242.0,402.5 246.0,384.7 250.0,389.8 254.0,400.0 258.0,403.3 262.0,409.3 266.0,376.3 270.0,406.1 274.0,405.8 278.0,355.8 282.0,388.5 286.0,373.0 290.0,389.8 294.0,387.3 298.0,392.6 302.0,402.4 306.0,408.4 310.0,400.4 314.0,398.6 318.0,397.5 322.0,362.1 326.0,408.6 330.0,378.9 334.0,416.3 338.0,407.4 342.0,399.3 346.0,390.8 350.0,396.6 354.0,393.0 358.0,378.2 362.0,392.9 366.0,406.6 370.0,377.1 374.0,382.8 378.0,384.2 382.0,422.4 386.0,407.5 390.0,398.2 394.0,407.8 398.0,394.8 402.0,407.1 406.0,403.2 410.0,397.9 414.0,399.9 418.0,412.2 422.0,415.2 426.0,403.1 430.0,410.4 434.0,403.1 438.0,393.2 442.0,429.5 446.0,417.7 450.0,400.2 454.0,406.5 458.0,401.6 462.0,391.9 466.0,383.5 470.0,393.9 474.0,403.4 478.0,400.8 482.0,420.8 486.0,399.3 490.0,397.5 494.0,423.2 498.0,424.5 502.0,405.2 506.0,414.3 510.0,414.0 514.0,404.7 518.0,394.5 522.0,401.2 526.0,410.1 530.0,389.1 534.0,403.1 538.0,431.1 542.0,399.6 546.0,422.7 550.0,413.2 554.0,420.1 558.0,398.8 562.0,403.9 566.0,400.9 570.0,403.9 574.0,410.4 578.0,425.1 582.0,422.5 586.0,398.1 590.0,406.9 594.0,421.3 598.0,392.4 602.0,395.3 606.0,392.8 610.0,410.4 614.0,401.1 618.0,406.6 622.0,428.1 626.0,384.6 630.0,391.3 634.0,407.0 638.0,401.3 642.0,405.8 646.0,400.6 650.0,400.0 654.0,400.0 658.0,401.7 662.0,410.3 666.0,392.2 670.0,399.3 674.0,361.7 678.0,373.0 682.0,398.3 686.0,411.9 690.0,382.5 694.0,408.2 698.0,377.5 702.0,400.6 706.0,402.2 710.0,406.3 714.0,415.7 718.0,365.8 722.0,388.5 726.0,385.0 730.0,372.4 734.0,394.7 738.0,384.4 742.0,380.3 746.0,401.4 750.0,386.9 754.0,375.9 758.0,367.7 762.0,402.2 766.0,401.2 770.0,332.1 774.0,380.9 778.0,393.6 782.0,360.6 786.0,398.8 790.0,397.6 794.0,358.1 798.0,402.9 802.0,365.9 806.0,383.0 810.0,382.3 814.0,331.1 818.0,398.7 822.0,396.0 826.0,355.3 830.0,355.1 834.0,370.8 838.0,389.8 842.0,392.8 846.0,381.2 850.0,369.2 854.0,398.9 858.0,357.4 862.0,386.7 866.0,378.9 870.0,342.4 874.0,370.2 878.0,348.8 882.0,363.1 886.0,384.5 890.0,376.7 894.0,362.6 898.0,354.7 902.0,354.8 906.0,340.3 910.0,342.8 914.0,363.0 918.0,371.8 922.0,369.0 926.0,379.7 930.0,369.7 934.0,371.2 938.0,388.3 942.0,389.3 946.0,379.5 950.0,338.8 954.0,385.6 958.0,334.5 962.0,371.5 966.0,349.5 970.0,346.3 974.0,373.3 978.0,385.6 982.0,379.2 986.0,352.5 990.0,380.7 994.0,369.2 998.0,350.4"/>
<polyline fill="none" stroke="#C15C17" stroke-width="1" stroke-linejoin="round" points="74.0,395.3 78.0,406.0 82.0,398.3 86.0,393.9 90.0,389.4 94.0,394.6 98.0,383.7 102.0,390.4 106.0,406.9 110.0,388.6 114.0,378.2 118.0,407.0 122.0,385.0 126.0,386.2 130.0,401.6 134.0,408.1 138.0,389.1 142.0,389.7 146.0,398.4 150.0,405.7 154.0,395.7 158.0,395.9 162.0,407.1 166.0,413.4 170.0,400.0 174.0,378.8 178.0,378.0 182.0,382.1 186.0,398.2 190.0,399.6 194.0,404.8 198.0,412.9 202.0,399.2 206.0,389.1 210.0,391.6 214.0,397.7 218.0,373.4 222.0,380.4 226.0,398.1 230.0,392.4 234.0,382.0 238.0,389.7 242.0,402.1 246.0,404.9 250.0,400.5 254.0,364.7 258.0,398.8 262.0,405.0 266.0,404.0 270.0,382.0 274.0,407.8 278.0,399.7 282.0,399.4 286.0,387.8 290.0,358.6 294.0,404.2 298.0,403.9 302.0,393.1 306.0,391.8 310.0,404.0 314.0,400.4 318.0,398.9 322.0,389.3 326.0,396.8 330.0,400.9 334.0,399.7 338.0,396.4 342.0,390.6 346.0,401.1 350.0,406.7 354.0,399.9 358.0,399.3 362.0,409.0 366.0,380.9 370.0,401.6 374.0,400.9 378.0,412.6 382.0,389.7 386.0,400.5 390.0,383.6 394.0,390.2 398.0,414.4 402.0,404.2 406.0,418.6 410.0,407.0 414.0,410.8 418.0,412.8 422.0,407.6 426.0,415.5 430.0,417.8 434.0,397.8 438.0,422.3 442.0,422.7 446.0,385.0 450.0,418.0 454.0,392.4 458.0,403.2 462.0,416.9 466.0,407.4 470.0,419.5 474.0,402.2 478.0,384.6 482.0,411.9 486.0,421.8 490.0,387.8 494.0,404.2 498.0,400.3 502.0,406.8 506.0,401.8 510.0,398.6 514.0,389.3 518.0,403.6 522.0,398.3 526.0,410.5 530.0,407.5 534.0,407.5 538.0,416.2 542.0,403.7 546.0,415.9 550.0,417.3 554.0,418.8 558.0,412.3 562.0,415.2 566.0,413.4 570.0,423.9 574.0,395.6 578.0,401.9 582.0,403.1 586.0,400.6 590.0,420.0 594.0,395.0 598.0,407.1 602.0,399.9 606.0,409.0 610.0,408.3 614.0,408.6 618.0,412.8 622.0,408.7 626.0,404.7 630.0,415.1 634.0,409.0 638.0,404.7 642.0,403.3 646.0,403.3 650.0,388.0 654.0,411.6 658.0,416.1 662.0,414.8 666.0,423.5 670.0,401.7 674.0,387.2 678.0,403.1 682.0,388.0 686.0,383.5 690.0,402.4 694.0,388.2 698.0,386.0 702.0,387.9 706.0,386.0 710.0,392.7 714.0,414.0 718.0,410.6 722.0,396.1 726.0,403.2 730.0,368.5 734.0,382.7 738.0,382.0 742.0,387.5 746.0,394.9 750.0,389.2 754.0,393.9 758.0,392.2 762.0,388.9 766.0,392.0 770.0,366.1 774.0,406.9 778.0,377.5 782.0,327.3 786.0,373.1 790.0,390.6 794.0,390.9 798.0,393.7 802.0,346.0 806.0,355.2 810.0,360.1 814.0,361.9 818.0,375.3 822.0,374.2 826.0,400.1 830.0,388.2 834.0,407.2 838.0,394.7 842.0,391.3 846.0,400.5 850.0,377.0 854.0,349.8 858.0,358.1 862.0,410.2 866.0,389.8 870.0,371.4 874.0,372.9 878.0,382.4 882.0,367.7 886.0,401.1 890.0,389.1 894.0,372.6 898.0,348.1 902.0,370.1 906.0,365.6 910.0,372.9 914.0,352.3 918.0,380.4 922.0,374.1 926.0,371.2 930.0,386.3 934.0,375.1 938.0,389.8 942.0,348.0 946.0,329.9 950.0,322.0 954.0,327.1 958.0,395.3 962.0,372.9 966.0,374.3 970.0,353.0 974.0,367.2 978.0,369.7 982.0,386.3 986.0,341.1 990.0,385.4 994.0,364.8 998.0,303.0"/>
<polyline fill="none" stroke="#890F02" stroke-width="1" stroke-linejoin="round" points="74.0,387.9 78.0,406.1 82.0,396.3 86.0,410.9 90.0,414.9 94.0,418.3 98.0,402.8 102.0,408.1 106.0,427.5 110.0,422.8 114.0,398.4 118.0,400.1 122.0,410.5 126.0,396.3 130.0,399.6 134.0,408.1 138.0,420.9 142.0,416.3 146.0,402.7 150.0,426.2 154.0,394.8 158.0,402.5 162.0,413.3 166.0,409.2 170.0,413.3 174.0,386.3 178.0,370.9 182.0,397.7 186.0,405.4 190.0,413.8 194.0,397.4 198.0,408.8 202.0,402.1 206.0,398.6 210.0,417.5 214.0,374.4 218.0,382.9 222.0,402.2 226.0,411.5 230.0,411.4 234.0,399.2 238.0,406.1 242.0,406.3 246.0,403.7 250.0,408.4 254.0,414.3 258.0,383.7 262.0,411.9 266.0,367.8 270.0,403.5 274.0,406.7 278.0,418.7 282.0,300.0 286.0,407.8 290.0,374.3 294.0,418.8 298.0,396.0 302.0,401.3 306.0,384.6 310.0,404.3 314.0,396.2 318.0,372.1 322.0,397.4 326.0,376.6 330.0,406.7 334.0,404.2 338.0,401.5 342.0,375.8 346.0,408.2 350.0,375.0 354.0,410.3 358.0,390.9 362.0,414.0 366.0,394.0 370.0,384.4 374.0,401.1 378.0,393.2 382.0,407.4 386.0,418.6 390.0,401.8 394.0,421.3 398.0,414.7 402.0,418.5 406.0,421.3 410.0,420.4 414.0,409.1 418.0,413.5 422.0,421.5 426.0,420.1 430.0,418.5 434.0,416.9 438.0,426.6 442.0,393.3 446.0,420.9 450.0,399.5 454.0,406.8 458.0,410.1 462.0,426.0 466.0,388.3 470.0,411.9 474.0,416.5 478.0,431.3 482.0,392.8 486.0,428.4 490.0,417.0 494.0,404.4 498.0,399.4 502.0,414.5 506.0,407.3 510.0,401.9 514.0,429.3 518.0,421.4 522.0,439.1 526.0,427.5 530.0,413.9 534.0,399.4 538.0,395.2 542.0,425.8 546.0,427.4 550.0,418.9 554.0,422.0 558.0,419.4 562.0,422.6 566.0,428.7 570.0,420.1 574.0,412.5 578.0,417.6 582.0,413.4 586.0,425.4 590.0,420.4 594.0,402.2 598.0,423.0 602.0,425.9 606.0,418.6 610.0,389.7 614.0,406.5 618.0,426.5 622.0,418.2 626.0,410.5 630.0,399.2 634.0,409.4 638.0,428.5 642.0,416.2 646.0,423.1 650.0,400.4 654.0,388.6 658.0,409.9 662.0,320.0 666.0,381.3 670.0,393.1 674.0,411.3 678.0,397.8 682.0,405.6 686.0,408.4 690.0,425.5 694.0,392.4 698.0,405.0 702.0,409.9 706.0,382.5 710.0,383.8 714.0,383.6 718.0,395.9 722.0,380.7 726.0,412.1 730.0,398.4 734.0,411.8 738.0,388.8 742.0,395.5 746.0,389.9 750.0,391.3 754.0,392.1 758.0,404.8 762.0,407.7 766.0,398.1 770.0,386.1 774.0,381.1 778.0,384.8 782.0,348.8 786.0,364.7 790.0,397.7 794.0,395.5 798.0,401.0 802.0,367.7 806.0,339.7 810.0,373.5 814.0,406.7 818.0,340.1 822.0,402.3 826.0,374.6 830.0,368.7 834.0,388.2 838.0,384.5 842.0,384.2 846.0,384.8 850.0,360.9 854.0,374.5 858.0,388.1 862.0,385.5 866.0,386.2 870.0,380.0 874.0,349.3 878.0,362.9 882.0,377.7 886.0,377.0 890.0,379.8 894.0,370.4 898.0,372.3 902.0,395.9 906.0,383.1 910.0,373.2 914.0,384.0 918.0,362.4 922.0,362.9 926.0,381.4 930.0,360.1 934.0,378.6 938.0,391.3 942.0,368.2 946.0,340.0 950.0,348.9 954.0,300.3 958.0,293.6 962.0,373.7 966.0,373.5 970.0,396.8 974.0,372.2 978.0,386.3 982.0,377.2 986.0,387.4 990.0,376.4 994.0,397.9 998.0,344.2"/>
<polyline fill="none" stroke="#0A437C" stroke-width="1" stroke-linejoin="round" points="74.0,387.0 78.0,400.5 82.0,400.7 86.0,376.9 90.0,396.0 94.0,390.1 98.0,381.1 102.0,379.8 106.0,378.8 110.0,376.9 114.0,376.1 118.0,397.7 122.0,386.8 126.0,384.4 130.0,391.4 134.0,380.0 138.0,393.5 142.0,406.5 146.0,390.1 150.0,406.0 154.0,380.8 158.0,398.5 162.0,361.0 166.0,402.6 170.0,375.5 174.0,396.0 178.0,413.7 182.0,384.1 186.0,404.8 190.0,398.6 194.0,408.8 198.0,401.0 202.0,398.8 206.0,382.7 210.0,392.3 214.0,386.9 218.0,397.2 222.0,399.7 226.0,405.2 230.0,404.1 234.0,393.4 238.0,393.8 242.0,399.4 246.0,392.0 250.0,385.6 254.0,383.1 258.0,387.4 262.0,400.7 266.0,379.1 270.0,381.2 274.0,387.0 278.0,396.4 282.0,391.0 286.0,392.3 290.0,363.6 294.0,406.1 298.0,396.0 302.0,390.2 306.0,397.4 310.0,405.7 314.0,405.6 318.0,392.2 322.0,385.9 326.0,382.6 330.0,386.0 334.0,380.2 338.0,396.4 342.0,398.4 346.0,388.4 350.0,393.2 354.0,378.8 358.0,406.8 362.0,393.6 366.0,392.9 370.0,390.8 374.0,413.9 378.0,414.3 382.0,421.2 386.0,405.8 390.0,408.1 394.0,400.7 398.0,387.0 402.0,396.5 406.0,409.5 410.0,403.1 414.0,405.5 418.0,408.7 422.0,392.9 426.0,394.2 430.0,386.5 434.0,397.4 438.0,379.6 442.0,403.9 446.0,400.7 450.0,401.8 454.0,396.6 458.0,397.4 462.0,391.9 466.0,403.4 470.0,409.9 474.0,404.3 478.0,409.7 482.0,398.6 486.0,408.3 490.0,397.5 494.0,401.7 498.0,405.8 502.0,417.7 506.0,399.1 510.0,426.2 514.0,416.0 518.0,403.9 522.0,411.5 526.0,390.7 530.0,400.7 534.0,409.8 538.0,415.2 542.0,416.5 546.0,410.4 550.0,419.6 554.0,382.4 558.0,407.7 562.0,413.3 566.0,406.4 570.0,407.8 574.0,404.3 578.0,411.3 582.0,371.9 586.0,387.0 590.0,397.9 594.0,389.1 598.0,399.8 602.0,416.7 606.0,407.1 610.0,413.0 614.0,413.3 618.0,400.9 622.0,406.2 626.0,398.1 630.0,402.5 634.0,390.8 638.0,388.1 642.0,401.0 646.0,394.6 650.0,398.4 654.0,401.9 658.0,381.0 662.0,385.5 666.0,359.2 670.0,394.3 674.0,386.1 678.0,407.3 682.0,399.4 686.0,408.6 690.0,403.5 694.0,403.1 698.0,385.3 702.0,387.1 706.0,396.8 710.0,400.8 714.0,403.4 718.0,372.5 722.0,376.7 726.0,401.6 730.0,385.9 734.0,394.5 738.0,392.5 742.0,376.8 746.0,383.1 750.0,408.7 754.0,398.9 758.0,395.3 762.0,339.7 766.0,356.1 770.0,376.3 774.0,388.7 778.0,383.5 782.0,387.2 786.0,358.6 790.0,398.0 794.0,370.1 798.0,400.6 802.0,359.9 806.0,370.9 810.0,372.1 814.0,375.2 818.0,370.3 822.0,316.6 826.0,374.7 830.0,380.4 834.0,375.8 838.0,378.1 842.0,345.1 846.0,384.3 850.0,383.8 854.0,398.7 858.0,358.0 862.0,373.2 866.0,377.7 870.0,360.1 874.0,380.7 878.0,380.1 882.0,380.3 886.0,340.3 890.0,386.4 894.0,349.9 898.0,352.5 902.0,342.6 906.0,358.6 910.0,363.8 914.0,380.8 918.0,372.4 922.0,362.2 926.0,382.6 930.0,348.6 934.0,337.2 938.0,389.4 942.0,347.3 946.0,347.8 950.0,345.0 954.0,361.6 958.0,363.6 962.0,335.4 966.0,375.5 970.0,347.4 974.0,389.3 978.0,346.6 982.0,361.3 986.0,355.6 990.0,372.6 994.0,358.5 998.0,357.3"/>
<polyline fill="none" stroke="#6D1F62" stroke-width="1" stroke-linejoin="round" points="74.0,404.4 78.0,384.0 82.0,415.4 86.0,397.3 90.0,399.2 94.0,392.9 98.0,410.7 102.0,386.7 106.0,402.1 110.0,371.2 114.0,420.0 118.0,391.5 122.0,400.8 126.0,402.3 130.0,404.7 134.0,400.8 138.0,402.5 142.0,389.7 146.0,417.5 150.0,406.2 154.0,400.6 158.0,408.2 162.0,405.1 166.0,401.2 170.0,405.4 174.0,391.8 178.0,385.7 182.0,395.6 186.0,417.1 190.0,379.2 194.0,398.4 198.0,379.8 202.0,402.9 206.0,395.4 210.0,396.2 214.0,405.0 218.0,393.6 222.0,367.2 226.0,408.5 230.0,406.9 234.0,402.8 238.0,383.1 242.0,406.1 246.0,394.7 250.0,403.9 254.0,404.9 258.0,395.1 262.0,403.8 266.0,394.4 270.0,399.1 274.0,389.2 278.0,390.6 282.0,387.2 286.0,376.8 290.0,383.8 294.0,384.2 298.0,384.1 302.0,378.3 306.0,391.1 310.0,377.1 314.0,390.6 318.0,382.2 322.0,379.2 326.0,392.5 330.0,392.0 334.0,391.7 338.0,401.5 342.0,382.5 346.0,409.7 350.0,392.1 354.0,398.4 358.0,394.0 362.0,408.2 366.0,391.7 370.0,413.4 374.0,408.2 378.0,407.2 382.0,415.9 386.0,382.6 390.0,396.3 394.0,405.3 398.0,410.2 402.0,404.5 406.0,408.4 410.0,406.4 414.0,404.9 418.0,390.5 422.0,415.4 426.0,412.8 430.0,406.8 434.0,358.4 438.0,399.5 442.0,403.2 446.0,421.1 450.0,393.7 454.0,400.2 458.0,406.4 462.0,420.1 466.0,409.5 470.0,418.8 474.0,406.1 478.0,417.3 482.0,409.5 486.0,410.2 490.0,412.1 494.0,426.8 498.0,422.3 502.0,417.5 506.0,391.8 510.0,413.1 514.0,404.4 518.0,410.0 522.0,418.5 526.0,405.8 530.0,388.4 534.0,413.9 538.0,421.2 542.0,413.7 546.0,402.7 550.0,406.2 554.0,410.4 558.0,407.2 562.0,397.1 566.0,414.4 570.0,399.6 574.0,414.1 578.0,402.9 582.0,381.4 586.0,410.0 590.0,399.2 594.0,395.3 598.0,401.4 602.0,407.0 606.0,423.9 610.0,413.1 614.0,406.0 618.0,409.2 622.0,409.1 626.0,399.4 630.0,418.3 634.0,405.9 638.0,408.8 642.0,416.7 646.0,415.9 650.0,402.2 654.0,400.3 658.0,418.2 662.0,381.8 666.0,290.0 670.0,406.5 674.0,393.7 678.0,414.6 682.0,399.6 686.0,392.1 690.0,386.5 694.0,377.6 698.0,381.1 702.0,406.9 706.0,405.2 710.0,378.5 714.0,387.0 718.0,389.7 722.0,395.1 726.0,395.2 730.0,390.7 734.0,424.2 738.0,384.9 742.0,396.4 746.0,352.9 750.0,330.0 754.0,393.1 758.0,379.7 762.0,400.1 766.0,391.8 770.0,393.7 774.0,377.1 778.0,371.5 782.0,358.6 786.0,389.4 790.0,380.7 794.0,379.0 798.0,391.7 802.0,372.7 806.0,406.6 810.0,369.8 814.0,376.5 818.0,356.7 822.0,389.2 826.0,375.4 830.0,363.4 834.0,381.7 838.0,381.3 842.0,344.1 846.0,379.7 850.0,353.5 854.0,372.4 858.0,367.8 862.0,349.0 866.0,365.6 870.0,386.3 874.0,369.2 878.0,370.0 882.0,383.1 886.0,395.4 890.0,375.2 894.0,390.4 898.0,331.7 902.0,374.2 906.0,329.6 910.0,361.5 914.0,361.0 918.0,366.1 922.0,322.2 926.0,372.1 930.0,352.6 934.0,364.5 938.0,369.4 942.0,363.7 946.0,364.1 950.0,347.2 954.0,368.4 958.0,360.6 962.0,330.0 966.0,377.5 970.0,369.7 974.0,364.3 978.0,302.6 982.0,387.3 986.0,386.5 990.0,327.4 994.0,368.0 998.0,381.5"/>
<polyline fill="none" stroke="#584477" stroke-width="1" stroke-linejoin="round" points="74.0,374.7 78.0,396.7 82.0,391.1 86.0,374.7 90.0,373.2 94.0,386.9 98.0,375.3 102.0,382.5 106.0,396.4 110.0,402.5 114.0,388.1 118.0,391.4 122.0,387.0 126.0,393.3 130.0,376.8 134.0,392.7 138.0,380.4 142.0,390.9 146.0,372.1 150.0,403.8 154.0,389.8 158.0,388.1 162.0,369.5 166.0,392.2 170.0,383.4 174.0,388.4 178.0,400.7 182.0,400.8 186.0,392.5 190.0,384.2 194.0,392.5 198.0,362.1 202.0,382.9 206.0,393.4 210.0,390.7 214.0,393.2 218.0,393.2 222.0,388.3 226.0,396.3 230.0,406.0 234.0,404.7 238.0,376.1 242.0,374.6 246.0,402.8 250.0,385.4 254.0,382.1 258.0,389.6 262.0,391.8 266.0,401.3 270.0,406.5 274.0,376.9 278.0,392.4 282.0,389.4 286.0,382.8 290.0,400.1 294.0,395.6 298.0,396.8 302.0,387.4 306.0,369.9 310.0,395.6 314.0,404.3 318.0,383.4 322.0,400.4 326.0,386.2 330.0,385.8 334.0,382.7 338.0,384.6 342.0,377.7 346.0,372.1 350.0,393.2 354.0,382.0 358.0,384.8 362.0,397.4 366.0,401.1 370.0,396.8 374.0,389.4 378.0,405.2 382.0,402.4 386.0,384.1 390.0,384.1 394.0,391.1 398.0,414.1 402.0,413.3 406.0,405.5 410.0,404.9 414.0,390.3 418.0,402.1 422.0,414.6 426.0,386.1 430.0,394.8 434.0,407.6 438.0,411.4 442.0,390.4 446.0,404.8 450.0,385.5 454.0,402.9 458.0,412.5 462.0,398.5 466.0,396.3 470.0,421.2 474.0,405.4 478.0,407.8 482.0,409.7 486.0,403.9 490.0,387.3 494.0,395.7 498.0,404.2 502.0,401.1 506.0,409.2 510.0,399.8 514.0,420.8 518.0,379.4 522.0,408.6 526.0,375.2 530.0,401.9 534.0,398.8 538.0,402.2 542.0,407.6 546.0,408.4 550.0,397.8 554.0,406.8 558.0,412.7 562.0,408.9 566.0,384.8 570.0,411.1 574.0,409.5 578.0,399.0 582.0,402.0 586.0,402.0 590.0,404.0 594.0,418.0 598.0,401.7 602.0,406.9 606.0,387.6 610.0,393.9 614.0,401.3 618.0,411.1 622.0,408.8 626.0,413.9 630.0,401.9 634.0,420.9 638.0,395.3 642.0,411.5 646.0,395.9 650.0,389.1 654.0,412.9 658.0,401.9 662.0,370.3 666.0,376.5 670.0,396.1 674.0,410.2 678.0,396.1 682.0,408.1 686.0,391.4 690.0,387.3 694.0,399.6 698.0,391.7 702.0,360.8 706.0,402.3 710.0,403.4 714.0,389.6 718.0,396.9 722.0,398.8 726.0,402.6 730.0,393.2 734.0,380.8 738.0,387.4 742.0,398.2 746.0,379.5 750.0,396.6 754.0,383.7 758.0,373.2 762.0,376.9 766.0,379.5 770.0,394.4 774.0,399.4 778.0,365.0 782.0,383.4 786.0,393.3 790.0,374.5 794.0,382.1 798.0,385.0 802.0,385.5 806.0,380.2 810.0,349.7 814.0,383.9 818.0,384.6 822.0,383.8 826.0,384.9 830.0,368.6 834.0,375.1 838.0,383.2 842.0,389.2 846.0,367.8 850.0,387.1 854.0,327.0 858.0,377.2 862.0,332.4 866.0,347.8 870.0,353.6 874.0,372.6 878.0,369.2 882.0,377.1 886.0,361.8 890.0,327.3 894.0,304.5 898.0,341.7 902.0,372.7 906.0,371.6 910.0,356.0 914.0,348.7 918.0,385.0 922.0,389.2 926.0,383.6 930.0,348.7 934.0,351.5 938.0,383.3 942.0,380.4 946.0,375.5 950.0,386.3 954.0,369.6 958.0,346.3 962.0,359.0 966.0,368.0 970.0,390.3 974.0,331.9 978.0,367.0 982.0,373.2 986.0,354.3 990.0,370.4 994.0,380.8 998.0,384.8"/>
<polyline fill="none" stroke="#B7DBAB" stroke-width="1" stroke-linejoin="round" points="74.0,403.5 78.0,412.3 82.0,405.9 86.0,400.7 90.0,408.8 94.0,417.6 98.0,409.0 102.0,407.2 106.0,397.8 110.0,382.1 114.0,402.5 118.0,404.3 122.0,412.0 126.0,382.4 130.0,423.8 134.0,401.2 138.0,398.9 142.0,395.5 146.0,413.9 150.0,402.5 154.0,405.0 158.0,421.6 162.0,393.8 166.0,418.8 170.0,395.9 174.0,410.3 178.0,405.3 182.0,397.0 186.0,425.4 190.0,394.4 194.0,402.3 198.0,384.9 202.0,394.5 206.0,389.0 210.0,415.5 214.0,405.6 218.0,404.9 222.0,399.1 226.0,403.4 230.0,369.5 234.0,381.1 238.0,399.3 242.0,390.9 246.0,406.6 250.0,399.2 254.0,383.3 258.0,403.5 262.0,390.0 266.0,409.6 270.0,400.3 274.0,401.2 278.0,388.4 282.0,389.9 286.0,414.2 290.0,403.5 294.0,407.2 298.0,415.1 302.0,394.2 306.0,405.0 310.0,384.4 314.0,405.4 318.0,415.6 322.0,386.2 326.0,395.4 330.0,421.9 334.0,403.4 338.0,392.1 342.0,390.1 346.0,381.6 350.0,382.2 354.0,407.2 358.0,390.1 362.0,377.7 366.0,403.7 370.0,408.2 374.0,403.9 378.0,413.4 382.0,412.9 386.0,394.1 390.0,413.3 394.0,414.1 398.0,395.4 402.0,412.9 406.0,413.4 410.0,406.6 414.0,414.6 418.0,386.3 422.0,407.9 426.0,410.6 430.0,420.5 434.0,415.0 438.0,389.6 442.0,423.1 446.0,413.9 450.0,418.5 454.0,400.5 458.0,418.3 462.0,410.7 466.0,422.0 470.0,412.8 474.0,398.3 478.0,401.3 482.0,418.2 486.0,410.9 490.0,410.8 494.0,402.7 498.0,409.7 502.0,419.0 506.0,408.0 510.0,430.6 514.0,417.5 518.0,423.6 522.0,427.0 526.0,402.2 530.0,422.2 534.0,409.5 538.0,398.0 542.0,420.0 546.0,414.5 550.0,419.1 554.0,423.3 558.0,417.0 562.0,413.2 566.0,408.2 570.0,403.4 574.0,408.5 578.0,420.7 582.0,396.2 586.0,422.1 590.0,412.3 594.0,410.5 598.0,399.4 602.0,403.2 606.0,419.0 610.0,409.1 614.0,395.9 618.0,390.8 622.0,405.6 626.0,405.9 630.0,414.3 634.0,401.7 638.0,410.3 642.0,414.9 646.0,394.5 650.0,423.9 654.0,394.2 658.0,416.7 662.0,410.4 666.0,399.7 670.0,400.8 674.0,400.4 678.0,412.1 682.0,389.9 686.0,398.3 690.0,408.9 694.0,397.6 698.0,402.1 702.0,393.8 706.0,410.2 710.0,409.0 714.0,407.7 718.0,404.3 722.0,393.2 726.0,396.8 730.0,386.0 734.0,395.6 738.0,390.0 742.0,391.4 746.0,407.4 750.0,379.9 754.0,400.3 758.0,375.3 762.0,407.0 766.0,388.5 770.0,374.5 774.0,380.5 778.0,410.2 782.0,393.0 786.0,371.1 790.0,376.2 794.0,389.0 798.0,393.2 802.0,360.8 806.0,370.1 810.0,396.4 814.0,376.4 818.0,342.2 822.0,390.1 826.0,381.5 830.0,383.2 834.0,354.1 838.0,363.7 842.0,394.5 846.0,377.1 850.0,374.5 854.0,324.1 858.0,389.1 862.0,362.4 866.0,378.5 870.0,397.0 874.0,332.2 878.0,380.5 882.0,406.4 886.0,366.9 890.0,378.1 894.0,387.7 898.0,355.8 902.0,357.1 906.0,328.3 910.0,399.8 914.0,380.7 918.0,376.9 922.0,346.1 926.0,389.2 930.0,347.9 934.0,362.3 938.0,311.7 942.0,388.1 946.0,358.7 950.0,371.9 954.0,335.1 958.0,382.9 962.0,372.4 966.0,393.3 970.0,385.3 974.0,387.4 978.0,321.7 982.0,347.1 986.0,383.3 990.0,381.7 994.0,360.7 998.0,379.2"/>
<polyline fill="none" stroke="#F4D598" stroke-width="1" stroke-linejoin="round" points="74.0,387.2 78.0,373.0 82.0,401.4 86.0,400.8 90.0,402.1 94.0,398.9 98.0,382.7 102.0,403.1 106.0,394.2 110.0,398.0 114.0,416.3 118.0,396.1 122.0,397.5 126.0,398.7 130.0,407.2 134.0,394.3 138.0,405.6 142.0,349.5 146.0,376.3 150.0,405.8 154.0,398.0 158.0,404.8 162.0,420.7 166.0,376.1 170.0,390.4 174.0,393.1 178.0,388.6 182.0,403.6 186.0,384.4 190.0,409.3 194.0,396.0 198.0,402.8 202.0,407.7 206.0,401.5 210.0,389.5 214.0,402.2 218.0,364.3 222.0,375.0 226.0,409.7 230.0,372.6 234.0,409.0 238.0,389.8 242.0,399.6 246.0,391.5 250.0,379.5 254.0,376.8 258.0,400.8 262.0,409.3 266.0,407.2 270.0,382.6 274.0,381.0 278.0,385.2 282.0,382.2 286.0,337.6 290.0,376.9 294.0,372.7 298.0,408.7 302.0,375.2 306.0,370.6 310.0,394.7 314.0,386.5 318.0,370.0 322.0,318.0 326.0,368.2 330.0,384.6 334.0,394.7 338.0,392.4 342.0,393.1 346.0,398.0 350.0,407.0 354.0,391.5 358.0,398.7 362.0,358.4 366.0,409.0 370.0,413.3 374.0,382.6 378.0,391.0 382.0,405.2 386.0,390.2 390.0,406.3 394.0,405.6 398.0,405.1 402.0,385.7 406.0,402.2 410.0,397.7 414.0,401.5 418.0,417.4 422.0,418.4 426.0,417.2 430.0,420.3 434.0,399.7 438.0,414.9 442.0,410.4 446.0,414.4 450.0,404.6 454.0,404.2 458.0,403.1 462.0,426.8 466.0,417.9 470.0,412.5 474.0,403.8 478.0,408.9 482.0,396.1 486.0,411.1 490.0,398.6 494.0,392.4 498.0,403.8 502.0,395.9 506.0,390.4 510.0,420.5 514.0,405.2 518.0,397.5 522.0,395.9 526.0,392.0 530.0,410.2 534.0,401.3 538.0,398.1 542.0,397.7 546.0,427.1 550.0,414.0 554.0,407.5 558.0,413.7 562.0,398.3 566.0,413.5 570.0,386.1 574.0,384.0 578.0,413.6 582.0,414.2 586.0,411.6 590.0,414.0 594.0,398.2 598.0,404.3 602.0,394.0 606.0,415.9 610.0,399.1 614.0,389.1 618.0,404.6 622.0,428.9 626.0,406.7 630.0,402.3 634.0,386.2 638.0,410.9 642.0,406.7 646.0,394.9 650.0,399.3 654.0,415.1 658.0,404.7 662.0,409.9 666.0,375.0 670.0,405.8 674.0,400.5 678.0,408.0 682.0,402.9 686.0,398.8 690.0,406.0 694.0,397.3 698.0,374.5 702.0,397.9 706.0,380.4 710.0,381.1 714.0,411.6 718.0,385.8 722.0,394.7 726.0,339.3 730.0,406.4 734.0,398.8 738.0,380.2 742.0,405.1 746.0,377.2 750.0,393.4 754.0,396.6 758.0,380.7 762.0,389.9 766.0,387.8 770.0,391.0 774.0,386.7 778.0,345.6 782.0,375.5 786.0,403.9 790.0,385.7 794.0,372.1 798.0,382.7 802.0,393.8 806.0,364.7 810.0,373.1 814.0,379.5 818.0,368.5 822.0,366.1 826.0,368.8 830.0,380.4 834.0,367.0 838.0,366.4 842.0,319.7 846.0,378.6 850.0,355.0 854.0,389.4 858.0,351.4 862.0,331.0 866.0,338.2 870.0,371.0 874.0,355.6 878.0,373.6 882.0,376.3 886.0,354.5 890.0,338.1 894.0,365.8 898.0,377.9 902.0,341.4 906.0,375.0 910.0,340.8 914.0,356.8 918.0,355.0 922.0,298.9 926.0,302.8 930.0,375.0 934.0,371.4 938.0,347.2 942.0,357.9 946.0,346.2 950.0,354.2 954.0,339.8 958.0,362.7 962.0,379.8 966.0,340.6 970.0,329.3 974.0,374.1 978.0,391.6 982.0,361.1 986.0,358.4 990.0,372.2 994.0,370.9 998.0,318.3"/>
<polyline fill="none" stroke="#70DBED" stroke-width="1" stroke-linejoin="round" points="74.0,405.4 78.0,397.5 82.0,401.3 86.0,399.0 90.0,377.0 94.0,396.5 98.0,392.6 102.0,393.9 106.0,394.4 110.0,378.3 114.0,390.4 118.0,396.9 122.0,402.1 126.0,399.0 130.0,387.7 134.0,391.2 138.0,405.4 142.0,383.2 146.0,406.3 150.0,386.5 154.0,405.7 158.0,396.5 162.0,390.0 166.0,392.2 170.0,376.8 174.0,391.8 178.0,387.1 182.0,395.2 186.0,396.6 190.0,402.2 194.0,397.9 198.0,388.8 202.0,391.0 206.0,394.2 210.0,401.1 214.0,367.0 218.0,390.8 222.0,397.6 226.0,402.7 230.0,404.3 234.0,381.5 238.0,393.8 242.0,405.5 246.0,371.3 250.0,385.9 254.0,373.8 258.0,368.8 262.0,383.6 266.0,399.3 270.0,370.5 274.0,372.3 278.0,404.1 282.0,383.4 286.0,390.8 290.0,367.4 294.0,395.8 298.0,379.5 302.0,374.6 306.0,361.2 310.0,361.4 314.0,385.0 318.0,362.8 322.0,349.4 326.0,381.0 330.0,402.0 334.0,390.0 338.0,396.0 342.0,415.9 346.0,380.0 350.0,410.8 354.0,392.7 358.0,408.0 362.0,400.1 366.0,411.7 370.0,396.7 374.0,379.5 378.0,384.7 382.0,414.0 386.0,384.6 390.0,401.6 394.0,395.9 398.0,405.0 402.0,398.1 406.0,423.3 410.0,399.9 414.0,412.1 418.0,415.6 422.0,418.4 426.0,403.5 430.0,393.9 434.0,404.2 438.0,403.3 442.0,401.3 446.0,400.3 450.0,414.0 454.0,422.2 458.0,411.4 462.0,404.0 466.0,409.5 470.0,399.4 474.0,407.7 478.0,406.4 482.0,405.3 486.0,405.7 490.0,404.2 494.0,403.9 498.0,414.4 502.0,419.6 506.0,403.1 510.0,420.9 514.0,406.5 518.0,401.7 522.0,404.0 526.0,421.8 530.0,423.3 534.0,398.5 538.0,415.0 542.0,391.7 546.0,420.7 550.0,399.3 554.0,403.6 558.0,384.7 562.0,388.0 566.0,387.1 570.0,395.2 574.0,404.3 578.0,390.8 582.0,411.8 586.0,410.3 590.0,416.2 594.0,405.1 598.0,378.1 602.0,391.4 606.0,396.8 610.0,406.0 614.0,387.6 618.0,410.6 622.0,407.2 626.0,403.4 630.0,400.7 634.0,398.4 638.0,384.4 642.0,400.1 646.0,390.3 650.0,416.7 654.0,393.3 658.0,392.1 662.0,379.0 666.0,389.1 670.0,385.2 674.0,412.4 678.0,406.5 682.0,402.1 686.0,394.2 690.0,378.3 694.0,376.2 698.0,415.0 702.0,402.9 706.0,394.9 710.0,392.1 714.0,389.1 718.0,406.3 722.0,382.9 726.0,396.1 730.0,365.1 734.0,403.6 738.0,355.3 742.0,374.2 746.0,388.4 750.0,360.1 754.0,385.7 758.0,388.5 762.0,378.2 766.0,383.8 770.0,389.6 774.0,391.6 778.0,326.6 782.0,377.2 786.0,354.0 790.0,403.9 794.0,362.7 798.0,371.1 802.0,363.9 806.0,370.0 810.0,384.4 814.0,372.8 818.0,382.1 822.0,375.5 826.0,355.6 830.0,356.4 834.0,339.7 838.0,373.9 842.0,393.2 846.0,381.4 850.0,357.5 854.0,344.2 858.0,362.4 862.0,370.1 866.0,375.5 870.0,364.7 874.0,386.0 878.0,352.8 882.0,334.2 886.0,381.7 890.0,351.7 894.0,383.2 898.0,365.3 902.0,357.0 906.0,338.0 910.0,353.5 914.0,362.4 918.0,357.9 922.0,324.6 926.0,355.4 930.0,386.8 934.0,357.6 938.0,379.0 942.0,373.2 946.0,359.6 950.0,376.6 954.0,346.5 958.0,382.9 962.0,352.7 966.0,338.5 970.0,342.2 974.0,349.9 978.0,358.7 982.0,345.6 986.0,366.7 990.0,366.1 994.0,361.4 998.0,380.2"/>
<polyline fill="none" stroke="#AEA2E0" stroke-width="1" stroke-linejoin="round" points="74.0,399.2 78.0,418.6 82.0,385.4 86.0,381.5 90.0,378.9 94.0,385.9 98.0,390.7 102.0,382.7 106.0,398.8 110.0,367.8 114.0,404.3 118.0,410.7 122.0,409.6 126.0,398.2 130.0,400.5 134.0,384.8 138.0,408.3 142.0,368.8 146.0,408.0 150.0,375.7 154.0,416.0 158.0,408.5 162.0,403.8 166.0,398.2 170.0,382.9 174.0,387.1 178.0,397.3 182.0,394.3 186.0,416.7 190.0,404.6 194.0,393.0 198.0,404.2 202.0,385.8 206.0,403.4 210.0,380.9 214.0,395.2 218.0,373.9 222.0,392.6 226.0,400.4 230.0,409.8 234.0,409.5 238.0,410.2 242.0,394.8 246.0,403.8 250.0,368.6 254.0,370.4 258.0,398.4 262.0,390.9 266.0,383.9 270.0,404.4 274.0,397.3 278.0,378.9 282.0,397.8 286.0,391.5 290.0,390.7 294.0,395.6 298.0,368.2 302.0,394.2 306.0,410.7 310.0,395.5 314.0,393.7 318.0,374.9 322.0,347.3 326.0,394.5 330.0,390.5 334.0,383.5 338.0,401.7 342.0,403.9 346.0,392.7 350.0,397.8 354.0,389.8 358.0,415.0 362.0,389.8 366.0,395.5 370.0,385.9 374.0,401.6 378.0,425.7 382.0,408.2 386.0,392.5 390.0,405.6 394.0,389.7 398.0,379.9 402.0,396.3 406.0,409.6 410.0,401.0 414.0,409.4 418.0,416.3 422.0,378.9 426.0,400.1 430.0,405.5 434.0,399.4 438.0,415.7 442.0,400.4 446.0,413.7 450.0,423.2 454.0,403.0 458.0,423.6 462.0,399.8 466.0,409.1 470.0,402.6 474.0,408.4 478.0,403.4 482.0,401.0 486.0,405.8 490.0,381.7 494.0,413.8 498.0,394.0 502.0,424.7 506.0,422.3 510.0,412.7 514.0,427.3 518.0,410.1 522.0,407.0 526.0,415.9 530.0,420.7 534.0,404.2 538.0,415.6 542.0,404.8 546.0,419.4 550.0,413.6 554.0,415.4 558.0,402.5 562.0,406.8 566.0,423.2 570.0,416.3 574.0,407.2 578.0,400.1 582.0,422.9 586.0,407.7 590.0,401.8 594.0,418.5 598.0,409.5 602.0,393.1 606.0,407.7 610.0,414.0 614.0,412.6 618.0,393.6 622.0,393.2 626.0,368.2 630.0,393.7 634.0,401.5 638.0,407.4 642.0,404.7 646.0,410.9 650.0,419.9 654.0,403.5 658.0,387.1 662.0,387.1 666.0,388.7 670.0,359.0 674.0,392.1 678.0,413.5 682.0,415.8 686.0,398.3 690.0,407.2 694.0,402.9 698.0,406.6 702.0,395.1 706.0,406.5 710.0,395.9 714.0,400.3 718.0,409.7 722.0,369.9 726.0,392.2 730.0,402.1 734.0,361.9 738.0,382.2 742.0,383.8 746.0,406.0 750.0,385.2 754.0,406.4 758.0,393.7 762.0,407.0 766.0,359.1 770.0,412.5 774.0,393.7 778.0,363.6 782.0,390.0 786.0,377.2 790.0,380.6 794.0,366.2 798.0,396.1 802.0,351.2 806.0,375.5 810.0,393.3 814.0,379.5 818.0,359.2 822.0,379.3 826.0,327.7 830.0,356.5 834.0,391.7 838.0,378.8 842.0,394.9 846.0,374.5 850.0,396.4 854.0,361.5 858.0,352.5 862.0,367.5 866.0,391.8 870.0,379.7 874.0,362.4 878.0,344.4 882.0,349.2 886.0,389.7 890.0,394.5 894.0,378.3 898.0,358.3 902.0,382.4 906.0,330.3 910.0,287.4 914.0,376.1 918.0,379.8 922.0,341.2 926.0,371.7 930.0,349.2 934.0,370.5 938.0,377.8 942.0,347.7 946.0,362.5 950.0,331.1 954.0,372.8 958.0,313.5 962.0,389.2 966.0,365.7 970.0,387.7 974.0,384.8 978.0,352.7 982.0,387.9 986.0,349.0 990.0,329.2 994.0,348.1 998.0,374.0"/>
<polyline fill="none" stroke="#BA43A9" stroke-width="1" stroke-linejoin="round" points="74.0,404.5 78.0,392.1 82.0,376.3 86.0,394.3 90.0,405.1 94.0,397.3 98.0,406.4 102.0,411.3 106.0,402.5 110.0,388.7 114.0,384.4 118.0,403.1 122.0,403.0 126.0,414.8 130.0,415.6 134.0,405.1 138.0,411.9 142.0,383.1 146.0,393.0 150.0,400.1 154.0,403.0 158.0,406.8 162.0,399.9 166.0,383.9 170.0,395.5 174.0,386.8 178.0,414.4 182.0,405.0 186.0,392.0 190.0,382.1 194.0,390.3 198.0,414.9 202.0,387.3 206.0,411.9 210.0,399.2 214.0,392.6 218.0,357.3 222.0,395.7 226.0,406.7 230.0,406.9 234.0,405.8 238.0,406.5 242.0,389.7 246.0,400.0 250.0,413.4 254.0,387.3 258.0,362.0 262.0,403.9 266.0,373.6 270.0,392.0 274.0,389.0 278.0,398.5 282.0,363.8 286.0,385.5 290.0,415.9 294.0,397.5 298.0,390.8 302.0,385.9 306.0,372.3 310.0,378.0 314.0,393.7 318.0,387.5 322.0,381.6 326.0,393.9 330.0,403.3 334.0,404.0 338.0,370.0 342.0,400.0 346.0,395.0 350.0,399.8 354.0,388.0 358.0,412.3 362.0,401.7 366.0,397.7 370.0,407.3 374.0,417.8 378.0,422.1 382.0,409.9 386.0,413.5 390.0,404.0 394.0,406.5 398.0,396.6 402.0,415.7 406.0,413.2 410.0,410.0 414.0,414.3 418.0,409.7 422.0,413.9 426.0,409.0 430.0,427.6 434.0,422.3 438.0,419.1 442.0,409.2 446.0,392.4 450.0,403.7 454.0,392.7 458.0,404.7 462.0,412.0 466.0,421.5 470.0,403.3 474.0,419.9 478.0,416.8 482.0,403.7 486.0,391.9 490.0,424.2 494.0,400.3 498.0,387.4 502.0,423.3 506.0,434.1 510.0,415.5 514.0,404.2 518.0,406.6 522.0,408.7 526.0,403.5 530.0,401.1 534.0,413.0 538.0,417.1 542.0,421.0 546.0,392.9 550.0,422.2 554.0,397.8 558.0,411.7 562.0,398.0 566.0,414.4 570.0,400.0 574.0,413.5 578.0,415.8 582.0,405.0 586.0,417.2 590.0,413.0 594.0,414.7 598.0,418.4 602.0,415.7 606.0,414.9 610.0,403.9 614.0,415.8 618.0,410.1 622.0,407.8 626.0,388.3 630.0,415.7 634.0,418.0 638.0,404.0 642.0,413.3 646.0,403.3 650.0,387.8 654.0,410.8 658.0,405.1 662.0,381.4 666.0,300.0 670.0,394.0 674.0,381.2 678.0,406.1 682.0,417.6 686.0,406.3 690.0,366.7 694.0,412.6 698.0,394.5 702.0,389.2 706.0,406.8 710.0,390.6 714.0,404.5 718.0,383.7 722.0,390.2 726.0,375.0 730.0,404.8 734.0,390.7 738.0,392.4 742.0,396.5 746.0,385.3 750.0,375.0 754.0,381.8 758.0,417.1 762.0,413.6 766.0,405.9 770.0,401.1 774.0,374.5 778.0,357.3 782.0,387.9 786.0,387.1 790.0,379.5 794.0,391.5 798.0,374.2 802.0,394.1 806.0,385.1 810.0,371.4 814.0,378.4 818.0,364.7 822.0,333.0 826.0,385.2 830.0,371.4 834.0,382.1 838.0,371.3 842.0,359.5 846.0,376.5 850.0,374.3 854.0,343.7 858.0,321.9 862.0,381.4 866.0,383.6 870.0,371.3 874.0,363.8 878.0,364.0 882.0,375.5 886.0,372.1 890.0,338.3 894.0,367.3 898.0,331.5 902.0,347.3 906.0,368.3 910.0,329.0 914.0,362.5 918.0,381.3 922.0,376.1 926.0,368.2 930.0,365.2 934.0,373.1 938.0,325.0 942.0,328.2 946.0,378.3 950.0,370.8 954.0,346.6 958.0,340.0 962.0,369.7 966.0,390.4 970.0,349.7 974.0,364.4 978.0,375.6 982.0,386.6 986.0,379.1 990.0,278.8 994.0,395.1 998.0,389.4"/>
<polyline fill="none" stroke="#F9E2D2" stroke-width="1" stroke-linejoin="round" points="74.0,399.1 78.0,400.4 82.0,403.7 86.0,397.3 90.0,409.8 94.0,383.8 98.0,380.7 102.0,401.2 106.0,394.3 110.0,404.3 114.0,379.2 118.0,404.3 122.0,413.2 126.0,405.6 130.0,411.4 134.0,392.9 138.0,399.4 142.0,398.3 146.0,398.8 150.0,414.3 154.0,405.5 158.0,388.4 162.0,406.6 166.0,397.7 170.0,401.5 174.0,389.6 178.0,405.9 182.0,411.1 186.0,395.4 190.0,393.7 194.0,397.2 198.0,403.0 202.0,381.9 206.0,381.5 210.0,391.4 214.0,389.0 218.0,387.5 222.0,408.8 226.0,390.6 230.0,403.3 234.0,402.8 238.0,381.0 242.0,407.5 246.0,393.8 250.0,402.2 254.0,359.9 258.0,394.7 262.0,388.3 266.0,370.2 270.0,407.4 274.0,387.8 278.0,394.2 282.0,405.5 286.0,386.9 290.0,401.5 294.0,362.5 298.0,387.6 302.0,377.7 306.0,408.5 310.0,383.7 314.0,375.4 318.0,371.7 322.0,393.4 326.0,399.5 330.0,393.0 334.0,395.5 338.0,408.4 342.0,368.1 346.0,392.9 350.0,391.0 354.0,396.6 358.0,395.1 362.0,412.5 366.0,387.1 370.0,409.5 374.0,372.5 378.0,398.0 382.0,413.3 386.0,414.0 390.0,409.0 394.0,415.0 398.0,404.2 402.0,407.4 406.0,402.0 410.0,423.7 414.0,403.8 418.0,405.8 422.0,404.2 426.0,409.0 430.0,418.9 434.0,401.7 438.0,415.9 442.0,409.4 446.0,406.5 450.0,412.9 454.0,419.3 458.0,408.0 462.0,403.6 466.0,386.8 470.0,410.3 474.0,416.8 478.0,404.1 482.0,409.7 486.0,408.8 490.0,411.5 494.0,418.7 498.0,405.9 502.0,398.7 506.0,418.0 510.0,390.2 514.0,416.1 518.0,391.8 522.0,413.6 526.0,411.9 530.0,411.1 534.0,415.1 538.0,419.6 542.0,399.3 546.0,414.4 550.0,408.9 554.0,407.9 558.0,398.7 562.0,416.3 566.0,411.9 570.0,386.5 574.0,420.7 578.0,411.3 582.0,417.4 586.0,409.2 590.0,415.0 594.0,413.9 598.0,410.6 602.0,423.5 606.0,409.8 610.0,405.2 614.0,403.7 618.0,395.7 622.0,423.9 626.0,411.6 630.0,410.2 634.0,411.3 638.0,411.1 642.0,401.3 646.0,409.4 650.0,410.1 654.0,416.0 658.0,401.4 662.0,383.0 666.0,398.1 670.0,405.2 674.0,400.2 678.0,409.5 682.0,407.1 686.0,400.3 690.0,413.5 694.0,410.8 698.0,414.5 702.0,406.4 706.0,395.4 710.0,390.0 714.0,373.2 718.0,378.5 722.0,379.9 726.0,413.2 730.0,391.1 734.0,395.3 738.0,395.0 742.0,385.4 746.0,393.9 750.0,369.8 754.0,391.3 758.0,384.5 762.0,391.3 766.0,401.5 770.0,377.5 774.0,389.9 778.0,373.6 782.0,390.5 786.0,360.3 790.0,396.7 794.0,395.0 798.0,409.7 802.0,397.2 806.0,371.3 810.0,380.8 814.0,374.6 818.0,381.2 822.0,374.4 826.0,372.5 830.0,349.7 834.0,381.0 838.0,357.8 842.0,353.4 846.0,323.1 850.0,389.3 854.0,401.6 858.0,351.4 862.0,376.0 866.0,357.8 870.0,373.7 874.0,307.2 878.0,398.7 882.0,330.9 886.0,389.6 890.0,389.9 894.0,381.9 898.0,382.7 902.0,334.9 906.0,370.5 910.0,327.5 914.0,383.9 918.0,337.4 922.0,361.6 926.0,386.7 930.0,386.8 934.0,405.5 938.0,379.4 942.0,393.9 946.0,362.7 950.0,354.9 954.0,375.1 958.0,358.0 962.0,362.9 966.0,381.9 970.0,351.5 974.0,381.8 978.0,372.7 982.0,365.3 986.0,368.2 990.0,395.6 994.0,359.1 998.0,347.9"/>
<polyline fill="none" stroke="#F0DA4C" stroke-width="2" stroke-linejoin="round" points="73.8,370.6 77.3,363.0 81.5,377.0 84.2,352.0 87.7,371.7 90.8,373.8 96.0,382.0 99.0,375.8 103.3,374.8 109.6,362.3 114.8,374.8 120.0,361.0 124.0,378.0 128.3,357.0 132.5,372.7 133.5,354.0 137.7,378.0 140.8,340.4 145.0,360.0 149.0,365.4 153.3,371.7 157.5,382.0 161.7,371.7 168.0,355.0 171.0,361.0 174.0,342.5 177.3,386.0 183.5,357.0 188.8,380.0 193.0,353.0 195.0,353.0 199.0,375.8 203.3,373.8 206.5,388.0 208.5,358.0 211.7,363.0 218.0,317.5 221.0,332.0 224.0,329.0 225.2,370.0 227.8,354.6 231.7,375.4 238.2,365.0 240.8,374.0 246.0,354.6 250.0,362.4 253.3,320.7 256.5,354.6 259.0,344.0 263.0,363.7 266.9,348.0 272.0,370.0 276.0,360.0 281.2,346.8 283.8,372.8 287.2,283.0 290.3,344.0 294.2,354.6 298.0,344.0 302.0,315.5 304.6,254.3 308.5,359.8 312.4,275.0 316.4,326.0 320.3,259.5 322.9,257.0 326.8,339.0 329.4,362.4 332.0,341.6 335.9,362.4 339.3,339.0 343.7,367.6 347.6,365.0 350.2,385.8 355.4,346.8 359.3,382.0 371.0,372.8 376.2,375.4 384.0,388.4 389.3,375.4 394.5,352.0 398.4,382.0 407.5,387.0 414.7,396.0 420.5,386.6 426.4,397.0 432.3,386.6 437.0,377.0 439.3,379.5 442.8,365.5 447.5,393.6 452.2,387.7 458.0,387.7 462.7,398.3 468.6,391.2 473.3,400.6 479.0,390.0 485.0,391.2 490.9,398.3 496.7,400.6 502.6,386.6 508.4,393.6 513.1,387.7 517.8,394.8 520.1,372.5 524.8,386.6 531.9,378.3 536.6,389.0 541.2,377.0 547.1,387.7 553.0,379.5 557.6,376.0 561.2,358.4 565.8,391.2 571.7,391.2 578.7,370.0 584.7,384.2 589.4,383.0 592.9,387.7 599.9,381.9 603.4,384.2 608.1,370.0 612.8,384.2 617.5,393.6 622.2,387.7 625.7,342.0 628.0,340.9 630.4,391.2 636.2,376.0 639.8,387.7 643.3,376.0 646.8,358.4 649.1,358.4 652.6,384.2 655.0,372.5 659.7,378.3 663.9,274.0 666.7,274.0 670.2,358.4 672.6,372.5 674.9,351.4 678.4,377.0 680.8,365.5 685.5,374.8 690.1,363.0 694.8,380.7 698.3,360.8 703.0,367.8 707.7,360.8 711.2,353.7 715.9,365.5 718.3,374.8 723.0,337.3 726.5,351.4 730.0,349.0 734.7,363.0 739.4,335.0 744.0,360.8 748.7,325.6 752.2,337.3 754.7,364.2 758.2,357.2 764.0,347.8 768.8,361.9 772.3,320.9 775.8,338.4 779.7,122.8 782.5,200.0 784.0,336.0 787.5,354.8 792.2,340.8 795.7,346.6 798.0,369.0 802.7,320.9 806.2,352.5 809.8,305.6 813.3,350.0 818.0,282.2 823.8,343.0 827.3,344.3 830.9,295.0 834.4,338.4 836.7,304.5 839.0,338.4 841.4,290.4 845.0,345.5 849.6,329.0 854.3,350.0 860.1,284.5 862.5,317.3 864.8,276.3 868.3,308.0 871.9,272.8 875.4,303.3 877.7,262.3 881.2,322.0 884.2,309.6 887.6,337.5 890.2,323.0 892.7,324.9 897.8,310.5 900.3,325.7 902.9,297.0 906.2,296.0 910.5,148.3 914.0,268.0 917.2,300.3 923.0,268.0 927.4,313.9 930.8,308.8 935.9,329.0 939.2,295.2 946.9,148.3 949.4,261.5 952.0,221.0 954.5,282.0 957.0,143.0 959.5,290.0 961.2,313.9 964.6,325.7 968.9,297.0 972.0,227.7 977.3,166.8 980.0,173.5 983.0,160.0 985.0,124.6 987.5,82.3 990.0,71.3 992.6,78.0 996.0,80.6 998.5,76.4"/></g>
<g><rect x="565" y="480" width="156" height="7" fill="#FDEC4E" fill-opacity="0.5"/><rect x="707" y="480" width="145" height="7" fill="#FDEC4E" fill-opacity="0.5"/><rect x="750" y="480" width="150" height="7" fill="#FDEC4E" fill-opacity="0.5"/><path d="M562.5,484.5 L567.5,479 L572.5,484.5 Z" fill="#F2DC4A"/><path d="M704.5,484.5 L709.5,479 L714.5,484.5 Z" fill="#F2DC4A"/><path d="M751.5,484.5 L756.5,479 L761.5,484.5 Z" fill="#F2DC4A"/></g>
<g class="axis"><text x="69" y="482.1" text-anchor="end">0%</text><text x="69" y="395.1" text-anchor="end">20.0%</text><text x="69" y="308.6" text-anchor="end">40.0%</text><text x="69" y="222.6" text-anchor="end">60.0%</text><text x="69" y="135.1" text-anchor="end">80.0%</text><text x="69" y="49.1" text-anchor="end">100.0%</text><text x="104.4" y="501.5" text-anchor="middle">08:30</text><text x="181.5" y="501.5" text-anchor="middle">09:00</text><text x="258.5" y="501.5" text-anchor="middle">09:30</text><text x="335.6" y="501.5" text-anchor="middle">10:00</text><text x="412.7" y="501.5" text-anchor="middle">10:30</text><text x="489.8" y="501.5" text-anchor="middle">11:00</text><text x="566.8" y="501.5" text-anchor="middle">11:30</text><text x="643.9" y="501.5" text-anchor="middle">12:00</text><text x="721.0" y="501.5" text-anchor="middle">12:30</text><text x="798.0" y="501.5" text-anchor="middle">13:00</text><text x="875.1" y="501.5" text-anchor="middle">13:30</text><text x="952.2" y="501.5" text-anchor="middle">14:00</text>
<text transform="translate(19.5,272) rotate(-90)" text-anchor="middle">Saturation %</text></g>
</svg>
<div class="hdr" style="left:726px">min</div><div class="hdr" style="left:791px">max</div><div class="hdr" style="left:856px">avg</div><div class="hdr" style="left:921px">current</div>
<div class="row" style="top:531px"><i style="background:#7EB26D"></i><span class="nm">web-01-sv-gprd.c.gitlab-production.internal</span><span class="v c1">10.55%</span><span class="v c2">47.66%</span><span class="v c3">19.54%</span><span class="v c4">30.47%</span></div><div class="row alt" style="top:556px"><i style="background:#EAB839"></i><span class="nm">web-02-sv-gprd.c.gitlab-production.internal</span><span class="v c1">11.72%</span><span class="v c2">50.39%</span><span class="v c3">20.52%</span><span class="v c4">23.44%</span></div><div class="row" style="top:581px"><i style="background:#6ED0E0"></i><span class="nm">web-03-sv-gprd.c.gitlab-production.internal</span><span class="v c1">11.72%</span><span class="v c2">95.31%</span><span class="v c3">25.66%</span><span class="v c4">92.19%</span></div><div class="row alt" style="top:606px"><i style="background:#EF843C"></i><span class="nm">web-04-sv-gprd.c.gitlab-production.internal</span><span class="v c1">9.38%</span><span class="v c2">51.56%</span><span class="v c3">19.74%</span><span class="v c4">22.27%</span></div><div class="row" style="top:631px"><i style="background:#E24D42"></i><span class="nm">web-05-sv-gprd.c.gitlab-production.internal</span><span class="v c1">12.11%</span><span class="v c2">74.22%</span><span class="v c3">22.33%</span><span class="v c4">27.34%</span></div><div class="row alt" style="top:656px"><i style="background:#1F78C1"></i><span class="nm">web-06-sv-gprd.c.gitlab-production.internal</span><span class="v c1">11.33%</span><span class="v c2">47.27%</span><span class="v c3">19.18%</span><span class="v c4">21.88%</span></div><div class="row" style="top:681px"><i style="background:#BA43A9"></i><span class="nm">web-07-sv-gprd.c.gitlab-production.internal</span><span class="v c1">10.16%</span><span class="v c2">40.23%</span><span class="v c3">19.87%</span><span class="v c4">19.53%</span></div><div class="row alt" style="top:706px"><i style="background:#705DA0"></i><span class="nm">web-08-sv-gprd.c.gitlab-production.internal</span><span class="v c1">11.33%</span><span class="v c2">43.75%</span><span class="v c3">19.54%</span><span class="v c4">23.44%</span></div><div class="row" style="top:731px"><i style="background:#508642"></i><span class="nm">web-09-sv-gprd.c.gitlab-production.internal</span><span class="v c1">10.94%</span><span class="v c2">73.83%</span><span class="v c3">21.28%</span><span class="v c4">32.03%</span></div><div class="row alt" style="top:756px;height:4px"></div>
</body></html>
